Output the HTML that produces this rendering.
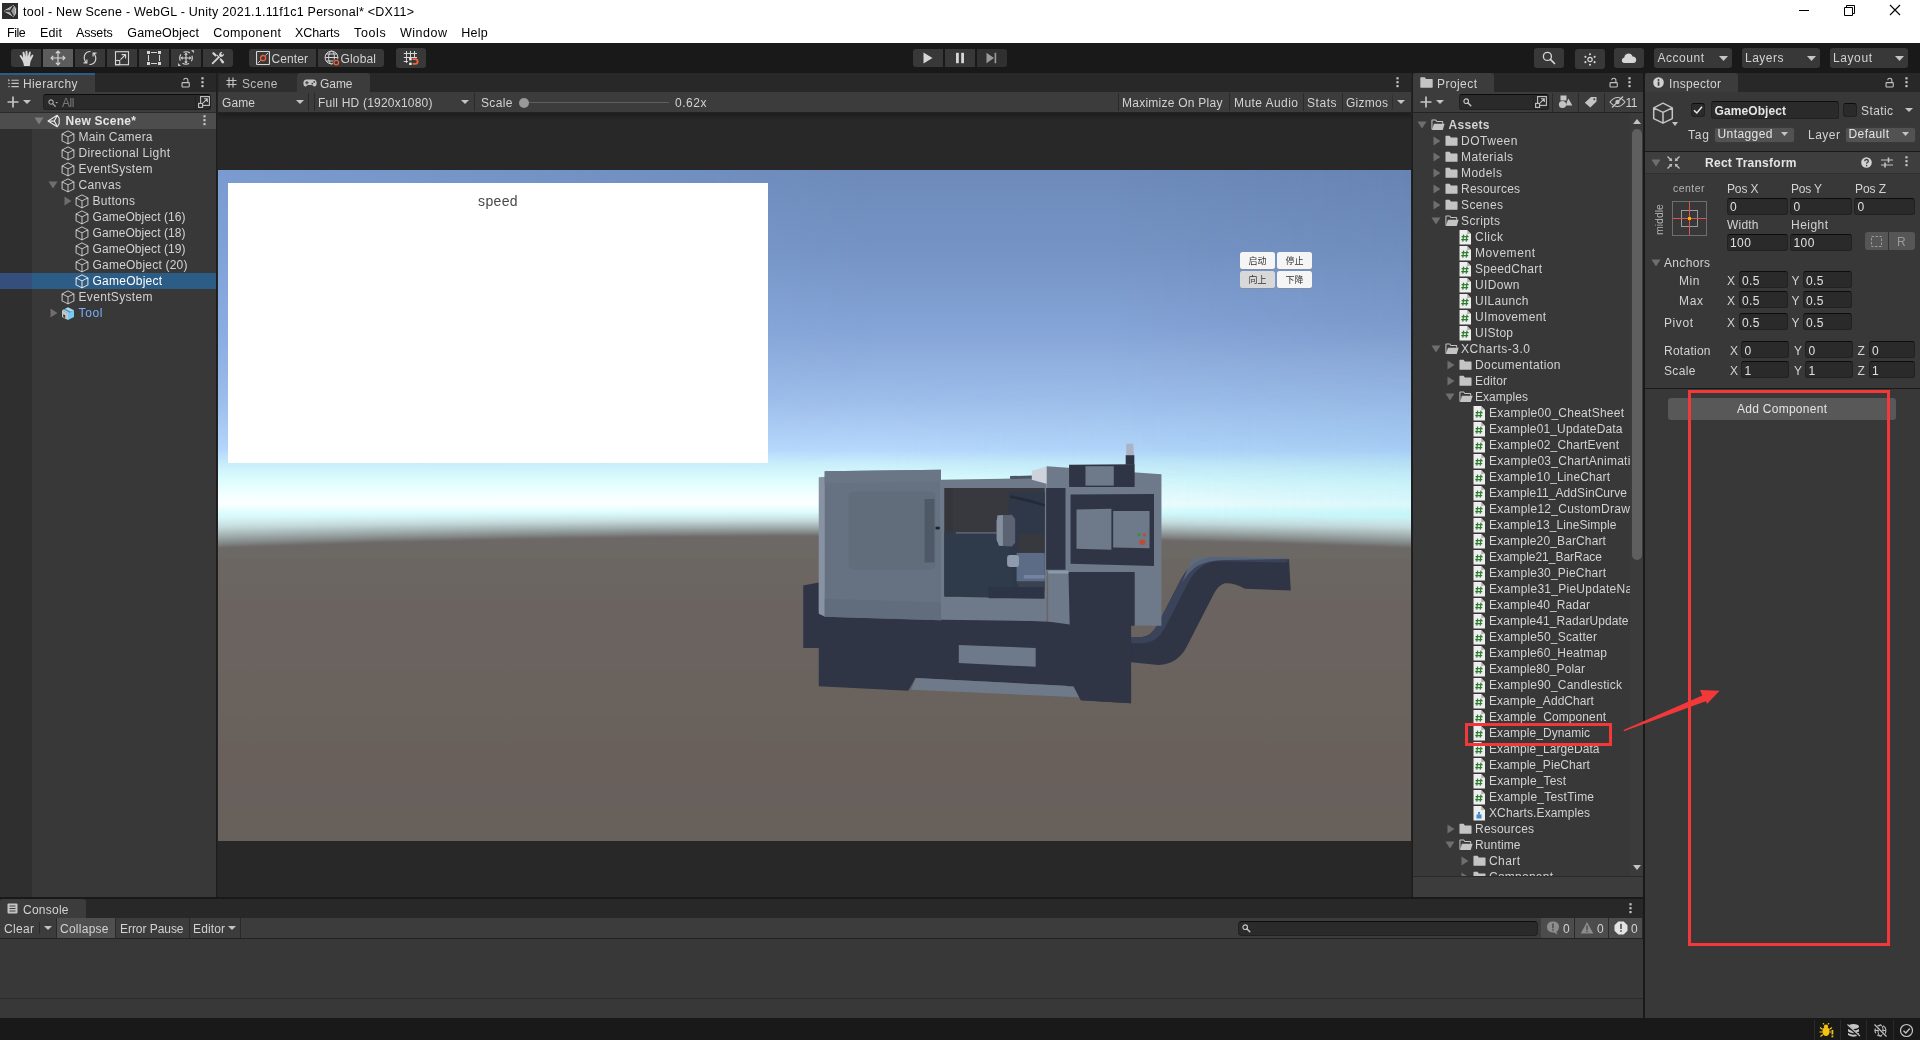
<!DOCTYPE html>
<html lang="en">
<head>
<meta charset="utf-8">
<title>tool - New Scene - WebGL - Unity 2021.1.11f1c1 Personal* &lt;DX11&gt;</title>
<style>
html,body{margin:0;padding:0;background:#191919;}
body{width:1920px;height:1040px;overflow:hidden;font-family:"Liberation Sans","Noto Sans CJK SC",sans-serif;font-size:12px;color:#d2d2d2;}
#app{will-change:transform;position:relative;width:1920px;height:1040px;overflow:hidden;background:#191919;}
#app div,#app span.t,#app svg.i{position:absolute;box-sizing:border-box;}
.t{white-space:nowrap;height:16px;line-height:16px;letter-spacing:.3px;}
.dim{color:#bdbdbd;}
.panel{background:#383838;}
.tabbar{background:#282828;}
.tab{background:#3c3c3c;border-radius:3px 3px 0 0;}
.tbar{background:#3c3c3c;border-bottom:1px solid #232323;}
.fld{background:#2a2a2a;border:1px solid #212121;border-top-color:#0d0d0d;border-radius:3px;}
.dd{background:#525252;border:1px solid #3a3a3a;border-radius:3px;}
.tb{background:#383838;border-radius:2px;}
.sep{background:#232323;}
</style>
</head>
<body>
<div id="app">
<!-- window title bar -->
<section class="window-title-bar">
<div style="left:0px;top:0px;width:1920px;height:43px;background:#ffffff;"></div>
<svg class="i" style="left:2px;top:3px;" width="16" height="16" viewBox="0 0 16 16"><rect width="16" height="16" fill="#2d2d2d"/><path d="M2.200 8 11.400 2.600 13.600 5.400V10.600L11.400 13.400Z" fill="#9a9a9a" stroke="#dcdcdc" stroke-width=".9" stroke-linejoin="round"/><path d="M2.400 8H8.300M8.300 8 11.300 2.800M8.300 8 11.300 13.200" fill="none" stroke="#2d2d2d" stroke-width="1.500"/></svg>
<span class="t" style="left:23px;top:4px;height:17px;line-height:17px;font-size:12.5px;color:#000;letter-spacing:0.25px;">tool - New Scene - WebGL - Unity 2021.1.11f1c1 Personal* &lt;DX11&gt;</span>
<svg class="i" style="left:1794px;top:0px;" width="20" height="20" viewBox="0 0 20 20"><path d="M5 10.5H15" stroke="#000" stroke-width="1"/></svg>
<svg class="i" style="left:1839px;top:0px;" width="20" height="20" viewBox="0 0 20 20"><path d="M5.5 7.5H13.5V15.5H5.5Z M7.5 7.5V5.5H15.5V13.5H13.5" fill="none" stroke="#000" stroke-width="1"/></svg>
<svg class="i" style="left:1885px;top:0px;" width="20" height="20" viewBox="0 0 20 20"><path d="M5 5 15 15M15 5 5 15" stroke="#000" stroke-width="1.1"/></svg>
</section>
<!-- menu bar -->
<section class="menu-bar">
<span class="t" style="left:7px;top:25px;height:17px;line-height:17px;font-size:12.5px;color:#000;letter-spacing:-0.48px;">File</span>
<span class="t" style="left:40px;top:25px;height:17px;line-height:17px;font-size:12.5px;color:#000;letter-spacing:0.15px;">Edit</span>
<span class="t" style="left:76px;top:25px;height:17px;line-height:17px;font-size:12.5px;color:#000;letter-spacing:-0.16px;">Assets</span>
<span class="t" style="left:127.3px;top:25px;height:17px;line-height:17px;font-size:12.5px;color:#000;letter-spacing:0.17px;">GameObject</span>
<span class="t" style="left:213.3px;top:25px;height:17px;line-height:17px;font-size:12.5px;color:#000;letter-spacing:0.38px;">Component</span>
<span class="t" style="left:295px;top:25px;height:17px;line-height:17px;font-size:12.5px;color:#000;letter-spacing:-0.08px;">XCharts</span>
<span class="t" style="left:354px;top:25px;height:17px;line-height:17px;font-size:12.5px;color:#000;letter-spacing:0.63px;">Tools</span>
<span class="t" style="left:400px;top:25px;height:17px;line-height:17px;font-size:12.5px;color:#000;letter-spacing:0.51px;">Window</span>
<span class="t" style="left:461.3px;top:25px;height:17px;line-height:17px;font-size:12.5px;color:#000;letter-spacing:0.23px;">Help</span>
</section>
<!-- main toolbar -->
<section class="main-toolbar">
<div style="left:0px;top:43px;width:1920px;height:30px;background:#191919;"></div>
<div style="left:11px;top:49px;width:30px;height:18px;background:#383838;border-radius:3px 0 0 3px;"></div>
<div style="left:43px;top:49px;width:30px;height:18px;background:#5c5c5c;border-radius:0;"></div>
<div style="left:75px;top:49px;width:30px;height:18px;background:#383838;border-radius:0;"></div>
<div style="left:107px;top:49px;width:30px;height:18px;background:#383838;border-radius:0;"></div>
<div style="left:139px;top:49px;width:30px;height:18px;background:#383838;border-radius:0;"></div>
<div style="left:171px;top:49px;width:30px;height:18px;background:#383838;border-radius:0;"></div>
<div style="left:203px;top:49px;width:30px;height:18px;background:#383838;border-radius:0 3px 3px 0;"></div>
<svg class="i" style="left:17.5px;top:49.5px;" width="17" height="17" viewBox="0 0 15.3 15.3"><path d="M3.1 8.2 1.6 5.6Q1.2 4.8 1.9 4.5 2.6 4.2 3.1 4.9L4.6 7 4.1 2.4Q4 1.6 4.8 1.5 5.6 1.4 5.8 2.2L6.7 6 6.8 1.4Q6.8 .6 7.6 .6 8.4 .6 8.5 1.4L8.8 6 9.9 2Q10.1 1.2 10.9 1.4 11.7 1.6 11.5 2.4L10.8 6.6 12.4 4.4Q12.9 3.8 13.5 4.2 14.1 4.6 13.7 5.3L11.6 9.6Q11.2 10.6 11 11.6L10.6 14.5H5.4L4.9 12Q4.4 10.2 3.1 8.2Z" fill="#d6d6d6"/></svg>
<svg class="i" style="left:50px;top:50px;" width="16" height="16" viewBox="0 0 16 16"><path d="M8 1.2V14.800M1.200 8H14.800M5.800 3.300 8 1.100 10.200 3.300M5.800 12.700 8 14.900 10.200 12.700M3.300 5.800 1.100 8 3.300 10.200M12.700 5.800 14.900 8 12.700 10.200" fill="none" stroke="#d6d6d6" stroke-width="1.150"/></svg>
<svg class="i" style="left:82px;top:50px;" width="16" height="16" viewBox="0 0 16 16"><path d="M8.600 1.500Q4.200 1.300 2.600 5.200 1.300 9.300 4.300 12.800M7.400 14.500Q11.800 14.700 13.400 10.800 14.700 6.700 11.700 3.200" fill="none" stroke="#d6d6d6" stroke-width="1.150"/><path d="M1.500 12.900H4.900V9.500M14.500 3.100H11.100V6.500" fill="none" stroke="#d6d6d6" stroke-width="1.150"/></svg>
<svg class="i" style="left:114px;top:50px;" width="16" height="16" viewBox="0 0 16 16"><rect x="1.500" y="1.700" width="13" height="13" fill="none" stroke="#d6d6d6" stroke-width="1.100"/><rect x="1.500" y="10.500" width="4.200" height="4.200" fill="none" stroke="#d6d6d6" stroke-width="1.100"/><path d="M6.500 9.700 11.500 4.700M7.600 4.600H11.600V8.600" fill="none" stroke="#d6d6d6" stroke-width="1.100"/></svg>
<svg class="i" style="left:146px;top:50px;" width="16" height="16" viewBox="0 0 16 16"><path d="M5 2.500H11M5 13.500H11M2.500 5V11M13.500 5V11" stroke="#d6d6d6" stroke-width="1.100" fill="none"/><rect x="1" y="1" width="3" height="3" fill="#d6d6d6"/><rect x="12" y="1" width="3" height="3" fill="#d6d6d6"/><rect x="1" y="12" width="3" height="3" fill="#d6d6d6"/><rect x="12" y="12" width="3" height="3" fill="#d6d6d6"/></svg>
<svg class="i" style="left:177px;top:49px;" width="18" height="18" viewBox="0 0 16 16"><circle cx="8" cy="8" r="5.6" fill="none" stroke="#d6d6d6" stroke-width="1" stroke-dasharray="6 2.8" stroke-dashoffset="3"/><path d="M8 3 9.6 5H8.5V7.5H11V6.4L13 8 11 9.6V8.5H8.5V11H9.6L8 13 6.4 11H7.5V8.5H5V9.6L3 8 5 6.4V7.5H7.5V5H6.4Z" fill="#d6d6d6"/><path d="M12.5 1 15 1 15 3.5ZM1 12.5V15H3.5Z" fill="#d6d6d6"/></svg>
<svg class="i" style="left:210px;top:50px;" width="16" height="16" viewBox="0 0 16 16"><path d="M2.600 13.400 8.600 7.400" stroke="#d6d6d6" stroke-width="1.700" stroke-linecap="round"/><path d="M9.400 3.400Q10.500 1.600 12.600 2.100L11 3.700 12.300 5 13.900 3.400Q14.400 5.500 12.600 6.600 11.400 7.200 10.100 6.700L9.300 5.900Q8.800 4.600 9.400 3.400Z" fill="#d6d6d6"/><path d="M2.400 2.400 4 2.200 7 5.200 5.400 6.800 2.300 3.800Z" fill="#d6d6d6"/><path d="M9.600 9.200 10.700 8.100 14 11.400Q14.500 12.300 13.700 13.100 12.900 13.800 12 13.300Z" fill="#d6d6d6"/><path d="M7 5.200 9.600 7.800" stroke="#d6d6d6" stroke-width="1.200"/></svg>
<div style="left:249px;top:49px;width:67px;height:18px;background:#383838;border-radius:3px 0 0 3px;"></div>
<div style="left:318px;top:49px;width:66px;height:18px;background:#383838;border-radius:0 3px 3px 0;"></div>
<svg class="i" style="left:256px;top:51px;" width="14" height="14" viewBox="0 0 14 14"><rect x=".55" y=".55" width="12.900" height="12.900" rx=".5" fill="none" stroke="#d6d6d6" stroke-width="1.100"/><path d="M1.800 12.200 12.200 1.800" stroke="#d6d6d6" stroke-width=".9"/><circle cx="7.100" cy="7.100" r="3.400" fill="#383838"/><circle cx="7.100" cy="7.100" r="2.600" fill="none" stroke="#f0623a" stroke-width="1.300"/></svg>
<span class="t" style="left:271.5px;top:51px;color:#d2d2d2;letter-spacing:0.10px;">Center</span>
<svg class="i" style="left:324px;top:50px;" width="17" height="17" viewBox="0 0 17 17"><circle cx="7.5" cy="7.5" r="6.4" fill="none" stroke="#d6d6d6" stroke-width="1"/><ellipse cx="7.5" cy="7.5" rx="2.9" ry="6.4" fill="none" stroke="#d6d6d6" stroke-width="1"/><path d="M1.2 7.5H13.8M2.2 4H12.8M2.2 11H12.8" stroke="#d6d6d6" stroke-width="1" fill="none"/><circle cx="12.3" cy="12.6" r="3.6" fill="#383838"/><circle cx="12.3" cy="12.6" r="2.3" fill="none" stroke="#f0623a" stroke-width="1.3"/></svg>
<span class="t" style="left:340.5px;top:51px;color:#d2d2d2;letter-spacing:0.16px;">Global</span>
<div style="left:396px;top:48px;width:30px;height:20px;background:#383838;border-radius:3px;"></div>
<svg class="i" style="left:403px;top:50px;" width="16" height="16" viewBox="0 0 16 16"><path d="M3.500 1V13M7.500 1V8M11.500 1V8M.800 3.500H14M.800 7.500H14M.800 11.500H5" stroke="#d6d6d6" stroke-width="1" fill="none"/><rect x="6.200" y="8" width="2.400" height="2.400" fill="#f0f0f0"/><rect x="6.200" y="12.600" width="2.400" height="2.400" fill="#f0f0f0"/><path d="M9.600 9.200H12.400Q14.600 9.300 14.600 11.500 14.600 13.800 12.400 13.800H9.600" fill="none" stroke="#f0623a" stroke-width="1.800"/></svg>
<div style="left:913px;top:49px;width:30px;height:18px;background:#383838;border-radius:3px 0 0 3px;"></div>
<div style="left:945px;top:49px;width:30px;height:18px;background:#383838;border-radius:0;"></div>
<div style="left:977px;top:49px;width:30px;height:18px;background:#303030;border-radius:0 3px 3px 0;"></div>
<svg class="i" style="left:922px;top:52px;" width="12" height="12" viewBox="0 0 12 12"><path d="M1.5 .5 10.5 6 1.5 11.5Z" fill="#d6d6d6"/></svg>
<svg class="i" style="left:954px;top:52px;" width="12" height="12" viewBox="0 0 12 12"><rect x="2" y=".8" width="2.8" height="10.4" fill="#d6d6d6"/><rect x="7.2" y=".8" width="2.8" height="10.4" fill="#d6d6d6"/></svg>
<svg class="i" style="left:985px;top:52px;" width="14" height="12" viewBox="0 0 14 12"><path d="M1.5 .8 9 6 1.5 11.2Z" fill="#9a9a9a"/><rect x="9.6" y=".8" width="1.6" height="10.4" fill="#9a9a9a"/></svg>
<div style="left:1534px;top:48px;width:30px;height:20px;background:#383838;border-radius:3px;"></div>
<div style="left:1575px;top:49px;width:30px;height:20px;background:#383838;border-radius:3px;"></div>
<div style="left:1614px;top:48px;width:30px;height:20px;background:#383838;border-radius:3px;"></div>
<svg class="i" style="left:1542px;top:51px;" width="14" height="14" viewBox="0 0 14 14"><circle cx="5.4" cy="5.4" r="4" fill="none" stroke="#d6d6d6" stroke-width="1.3"/><path d="M8.4 8.4 12.5 12.5" stroke="#d6d6d6" stroke-width="1.7" stroke-linecap="round"/></svg>
<svg class="i" style="left:1582px;top:52px;" width="16" height="15" viewBox="0 0 16 15"><circle cx="8" cy="7.500" r="2.200" fill="none" stroke="#d6d6d6" stroke-width="1.200"/><g fill="#d6d6d6"><circle cx="8.00" cy="2.20" r="1.050"/><circle cx="12.59" cy="4.85" r="1.050"/><circle cx="12.59" cy="10.15" r="1.050"/><circle cx="8.00" cy="12.80" r="1.050"/><circle cx="3.41" cy="10.15" r="1.050"/><circle cx="3.41" cy="4.85" r="1.050"/></g></svg>
<svg class="i" style="left:1621px;top:52px;" width="16" height="12" viewBox="0 0 16 12"><path d="M4 11Q.8 11 .8 8.2 .8 5.8 3.3 5.4 3.8 2 7.2 1.6 10.6 1.4 11.6 4.6 15.2 4.8 15.2 8 15.2 11 12 11Z" fill="#d6d6d6"/></svg>
<div style="left:1654px;top:48px;width:78px;height:20px;background:#383838;border-radius:3px;"></div>
<span class="t" style="left:1657.5px;top:50px;color:#d2d2d2;letter-spacing:0.52px;">Account</span>
<svg class="i" style="left:1719px;top:55.5px;" width="9" height="5" viewBox="0 0 9 5"><path d="M0 0H9L4.5 5Z" fill="#c4c4c4"/></svg>
<div style="left:1742px;top:48px;width:78px;height:20px;background:#383838;border-radius:3px;"></div>
<span class="t" style="left:1745px;top:50px;color:#d2d2d2;letter-spacing:0.50px;">Layers</span>
<svg class="i" style="left:1807px;top:55.5px;" width="9" height="5" viewBox="0 0 9 5"><path d="M0 0H9L4.5 5Z" fill="#c4c4c4"/></svg>
<div style="left:1830px;top:48px;width:78px;height:20px;background:#383838;border-radius:3px;"></div>
<span class="t" style="left:1833px;top:50px;color:#d2d2d2;letter-spacing:0.59px;">Layout</span>
<svg class="i" style="left:1895px;top:55.5px;" width="9" height="5" viewBox="0 0 9 5"><path d="M0 0H9L4.5 5Z" fill="#c4c4c4"/></svg>
</section>
<!-- hierarchy panel -->
<section class="hierarchy-panel">
<div class="panel" style="left:0px;top:73px;width:216px;height:824px;"></div>
<div class="tabbar" style="left:0px;top:73px;width:216px;height:19px;"></div>
<div class="tab" style="left:0px;top:73px;width:95px;height:19px;border-top:2px solid #2c5d87;border-radius:0;"></div>
<svg class="i" style="left:7.5px;top:78.5px;" width="11" height="9" viewBox="0 0 11 9"><path d="M3.400 1.200H10.800M3.400 4.400H10.800M3.400 7.600H10.800" stroke="#c4c4c4" stroke-width="1.100"/><path d="M.2 0 2 1.200 .2 2.400Z" fill="#c4c4c4"/><rect x=".4" y="3.800" width="1.300" height="1.200" fill="#c4c4c4"/><rect x=".4" y="7" width="1.300" height="1.200" fill="#c4c4c4"/></svg>
<span class="t" style="left:23px;top:76px;letter-spacing:0.39px;">Hierarchy</span>
<svg class="i" style="left:181px;top:76.5px;" width="10" height="11" viewBox="0 0 10 11"><path d="M6.900 5.600V3.400Q6.900 1.300 4.800 1.300 2.800 1.300 2.700 3.200" fill="none" stroke="#c4c4c4" stroke-width="1.100"/><rect x="1.050" y="5.650" width="7.200" height="4.300" rx=".6" fill="none" stroke="#c4c4c4" stroke-width="1.100"/></svg>
<svg class="i" style="left:201px;top:77px;" width="3" height="11" viewBox="0 0 3 11"><rect x=".4" y=".2" width="2.200" height="2.200" fill="#c4c4c4"/><rect x=".4" y="4.100" width="2.200" height="2.200" fill="#c4c4c4"/><rect x=".4" y="8" width="2.200" height="2.200" fill="#c4c4c4"/></svg>
<div class="tbar" style="left:0px;top:92px;width:216px;height:21px;"></div>
<svg class="i" style="left:7px;top:96px;" width="12" height="12" viewBox="0 0 12 12"><path d="M6 .5V11.5M.5 6H11.5" stroke="#c4c4c4" stroke-width="1.7"/></svg>
<svg class="i" style="left:23px;top:100px;" width="8" height="4" viewBox="0 0 8 4"><path d="M0 0H8L4.0 4Z" fill="#c4c4c4"/></svg>
<div class="fld" style="left:43px;top:94px;width:168px;height:16px;"></div>
<svg class="i" style="left:48px;top:98.5px;" width="11" height="8.5" viewBox="0 0 13 10"><circle cx="3.6" cy="3.6" r="2.6" fill="none" stroke="#a8a8a8" stroke-width="1.3"/><path d="M5.5 5.5 8.5 8.5" stroke="#a8a8a8" stroke-width="1.5" stroke-linecap="round"/><path d="M8.6 3.4H12L10.3 5.2Z" fill="#a8a8a8"/></svg>
<span class="t" style="left:62px;top:95px;color:#7a7a7a;letter-spacing:-0.42px;">All</span>
<div style="left:195px;top:95px;width:1px;height:14px;background:#212121;"></div>
<svg class="i" style="left:198px;top:96px;" width="12" height="12" viewBox="0 0 12 12"><rect x="2.600" y=".600" width="8.800" height="8.800" fill="none" stroke="#c4c4c4" stroke-width="1.100"/><rect x=".600" y="7.400" width="4" height="4" fill="#2a2a2a" stroke="#c4c4c4" stroke-width="1.100"/><path d="M5.200 6.800 9.200 2.800M6 2.700H9.300V6" fill="none" stroke="#c4c4c4" stroke-width="1.100"/></svg>
<div style="left:0px;top:113px;width:32px;height:784px;background:#2f2f2f;"></div>
<div style="left:0px;top:113px;width:216px;height:16px;background:#4d4d4d;"></div>
<div style="left:0px;top:112px;width:216px;height:1px;background:#2a2a2a;"></div>
<svg class="i" style="left:34px;top:117px;" width="10" height="8" viewBox="0 0 10 8"><path d="M.5 .5H9.5L5 7.5Z" fill="#7d7d7d"/></svg>
<svg class="i" style="left:47px;top:114px;" width="13" height="14" viewBox="0 0 13 14"><path d="M1 7 10.200 1.300 12.200 4.300V9.700L10.200 12.700Z" fill="none" stroke="#e6e6e6" stroke-width="1.150" stroke-linejoin="round"/><path d="M1 7H7.300M7.300 7 10.200 1.500M7.300 7 10.200 12.500" fill="none" stroke="#e6e6e6" stroke-width="1.250"/></svg>
<span class="t" style="left:65.5px;top:113px;font-weight:bold;color:#e4e4e4;letter-spacing:0.27px;">New Scene*</span>
<svg class="i" style="left:203px;top:115px;" width="3" height="11" viewBox="0 0 3 11"><rect x=".4" y=".2" width="2.200" height="2.200" fill="#c4c4c4"/><rect x=".4" y="4.100" width="2.200" height="2.200" fill="#c4c4c4"/><rect x=".4" y="8" width="2.200" height="2.200" fill="#c4c4c4"/></svg>
<svg class="i" style="left:60.5px;top:129.5px;" width="14" height="15" viewBox="0 0 14 15"><path d="M7 .9 12.9 3.9V10.9L7 13.9 1.1 10.9V3.9Z M1.1 3.9 7 6.9 12.9 3.9 M7 6.9V13.9" fill="none" stroke="#c4c4c4" stroke-width="1.050" stroke-linejoin="round"/></svg>
<span class="t" style="left:78.5px;top:129px;letter-spacing:0.20px;">Main Camera</span>
<svg class="i" style="left:60.5px;top:145.5px;" width="14" height="15" viewBox="0 0 14 15"><path d="M7 .9 12.9 3.9V10.9L7 13.9 1.1 10.9V3.9Z M1.1 3.9 7 6.9 12.9 3.9 M7 6.9V13.9" fill="none" stroke="#c4c4c4" stroke-width="1.050" stroke-linejoin="round"/></svg>
<span class="t" style="left:78.5px;top:145px;letter-spacing:0.34px;">Directional Light</span>
<svg class="i" style="left:60.5px;top:161.5px;" width="14" height="15" viewBox="0 0 14 15"><path d="M7 .9 12.9 3.9V10.9L7 13.9 1.1 10.9V3.9Z M1.1 3.9 7 6.9 12.9 3.9 M7 6.9V13.9" fill="none" stroke="#c4c4c4" stroke-width="1.050" stroke-linejoin="round"/></svg>
<span class="t" style="left:78.5px;top:161px;letter-spacing:0.33px;">EventSystem</span>
<svg class="i" style="left:47.5px;top:181px;" width="10" height="8" viewBox="0 0 10 8"><path d="M.5 .5H9.5L5 7.5Z" fill="#6e6e6e"/></svg>
<svg class="i" style="left:60.5px;top:177.5px;" width="14" height="15" viewBox="0 0 14 15"><path d="M7 .9 12.9 3.9V10.9L7 13.9 1.1 10.9V3.9Z M1.1 3.9 7 6.9 12.9 3.9 M7 6.9V13.9" fill="none" stroke="#c4c4c4" stroke-width="1.050" stroke-linejoin="round"/></svg>
<span class="t" style="left:78.5px;top:177px;letter-spacing:0.36px;">Canvas</span>
<svg class="i" style="left:63.5px;top:196px;" width="8" height="10" viewBox="0 0 8 10"><path d="M.5 .5 7.5 5 .5 9.5Z" fill="#6e6e6e"/></svg>
<svg class="i" style="left:74.5px;top:193.5px;" width="14" height="15" viewBox="0 0 14 15"><path d="M7 .9 12.9 3.9V10.9L7 13.9 1.1 10.9V3.9Z M1.1 3.9 7 6.9 12.9 3.9 M7 6.9V13.9" fill="none" stroke="#c4c4c4" stroke-width="1.050" stroke-linejoin="round"/></svg>
<span class="t" style="left:92.5px;top:193px;letter-spacing:0.30px;">Buttons</span>
<svg class="i" style="left:74.5px;top:209.5px;" width="14" height="15" viewBox="0 0 14 15"><path d="M7 .9 12.9 3.9V10.9L7 13.9 1.1 10.9V3.9Z M1.1 3.9 7 6.9 12.9 3.9 M7 6.9V13.9" fill="none" stroke="#c4c4c4" stroke-width="1.050" stroke-linejoin="round"/></svg>
<span class="t" style="left:92.5px;top:209px;letter-spacing:0.07px;">GameObject (16)</span>
<svg class="i" style="left:74.5px;top:225.5px;" width="14" height="15" viewBox="0 0 14 15"><path d="M7 .9 12.9 3.9V10.9L7 13.9 1.1 10.9V3.9Z M1.1 3.9 7 6.9 12.9 3.9 M7 6.9V13.9" fill="none" stroke="#c4c4c4" stroke-width="1.050" stroke-linejoin="round"/></svg>
<span class="t" style="left:92.5px;top:225px;letter-spacing:0.07px;">GameObject (18)</span>
<svg class="i" style="left:74.5px;top:241.5px;" width="14" height="15" viewBox="0 0 14 15"><path d="M7 .9 12.9 3.9V10.9L7 13.9 1.1 10.9V3.9Z M1.1 3.9 7 6.9 12.9 3.9 M7 6.9V13.9" fill="none" stroke="#c4c4c4" stroke-width="1.050" stroke-linejoin="round"/></svg>
<span class="t" style="left:92.5px;top:241px;letter-spacing:0.07px;">GameObject (19)</span>
<svg class="i" style="left:74.5px;top:257.5px;" width="14" height="15" viewBox="0 0 14 15"><path d="M7 .9 12.9 3.9V10.9L7 13.9 1.1 10.9V3.9Z M1.1 3.9 7 6.9 12.9 3.9 M7 6.9V13.9" fill="none" stroke="#c4c4c4" stroke-width="1.050" stroke-linejoin="round"/></svg>
<span class="t" style="left:92.5px;top:257px;letter-spacing:0.21px;">GameObject (20)</span>
<div style="left:0px;top:273px;width:216px;height:16px;background:#2c5d87;"></div>
<div style="left:0px;top:273px;width:32px;height:16px;background:#344f7c;"></div>
<svg class="i" style="left:74.5px;top:273.5px;" width="14" height="15" viewBox="0 0 14 15"><path d="M7 .9 12.9 3.9V10.9L7 13.9 1.1 10.9V3.9Z M1.1 3.9 7 6.9 12.9 3.9 M7 6.9V13.9" fill="none" stroke="#e6e6e6" stroke-width="1.050" stroke-linejoin="round"/></svg>
<span class="t" style="left:92.5px;top:273px;color:#ffffff;letter-spacing:0.24px;">GameObject</span>
<svg class="i" style="left:60.5px;top:289.5px;" width="14" height="15" viewBox="0 0 14 15"><path d="M7 .9 12.9 3.9V10.9L7 13.9 1.1 10.9V3.9Z M1.1 3.9 7 6.9 12.9 3.9 M7 6.9V13.9" fill="none" stroke="#c4c4c4" stroke-width="1.050" stroke-linejoin="round"/></svg>
<span class="t" style="left:78.5px;top:289px;letter-spacing:0.33px;">EventSystem</span>
<svg class="i" style="left:49.5px;top:308px;" width="8" height="10" viewBox="0 0 8 10"><path d="M.5 .5 7.5 5 .5 9.5Z" fill="#6e6e6e"/></svg>
<svg class="i" style="left:60.5px;top:306px;" width="14" height="15" viewBox="0 0 14 15"><path d="M1 4.200 7 7.200V14L1 11Z" fill="#c6c6c6"/><path d="M7 7.200 13 4.200V11L7 14Z" fill="#74cbf6"/><path d="M7 1.200 13 4.200 7 7.200 1 4.200Z" fill="#9adcfb"/><path d="M4 2.700 10 5.700 8.500 6.450 2.500 3.450Z" fill="#383838" opacity=".5"/><path d="M2.200 8.300 4.200 9.300V12L2.200 11Z" fill="#383838"/></svg>
<span class="t" style="left:78.5px;top:305px;color:#7baef5;letter-spacing:0.66px;">Tool</span>
</section>
<!-- scene/game panel -->
<section class="scene-game-panel">
<div style="left:216px;top:73px;width:2px;height:824px;background:linear-gradient(90deg,#1b1b1b,#252525);"></div>
<div style="left:1411px;top:73px;width:2px;height:824px;background:linear-gradient(90deg,#242424,#1b1b1b);"></div>
<div style="left:218px;top:73px;width:1193px;height:824px;background:#282828;"></div>
<div class="tabbar" style="left:218px;top:73px;width:1193px;height:19px;"></div>
<div style="left:218.5px;top:74px;width:78px;height:18px;background:#2e2e2e;border-radius:3px 3px 0 0;"></div>
<div class="tab" style="left:297px;top:73px;width:73px;height:19px;"></div>
<svg class="i" style="left:226px;top:77px;" width="11" height="11" viewBox="0 0 11 11"><path d="M3 .5V10.500M7 .5V10.500M.5 3.500H10.500M.5 7.500H10.500" stroke="#c4c4c4" stroke-width="1.150"/></svg>
<span class="t" style="left:242px;top:76px;color:#bdbdbd;letter-spacing:0.37px;">Scene</span>
<svg class="i" style="left:303px;top:79px;" width="14" height="8" viewBox="0 0 14 8"><path d="M3.6 .4H10.4Q13.6 .4 13.6 3.9 13.6 7.4 11.4 7.4 10.2 7.4 9.2 6H4.8Q3.8 7.4 2.6 7.4 .4 7.4 .4 3.9 .4 .4 3.6 .4Z" fill="#c4c4c4"/><path d="M3.9 2V5.6M2.1 3.8H5.7" stroke="#3c3c3c" stroke-width="1.1"/><circle cx="9.3" cy="4.6" r=".9" fill="#3c3c3c"/><circle cx="11.2" cy="2.9" r=".9" fill="#3c3c3c"/></svg>
<span class="t" style="left:320px;top:76px;letter-spacing:-0.06px;">Game</span>
<svg class="i" style="left:1396px;top:77px;" width="3" height="11" viewBox="0 0 3 11"><rect x=".4" y=".2" width="2.200" height="2.200" fill="#c4c4c4"/><rect x=".4" y="4.100" width="2.200" height="2.200" fill="#c4c4c4"/><rect x=".4" y="8" width="2.200" height="2.200" fill="#c4c4c4"/></svg>
<div class="tbar" style="left:218px;top:92px;width:1193px;height:21px;"></div>
<span class="t" style="left:222px;top:95px;letter-spacing:0.11px;">Game</span>
<svg class="i" style="left:296px;top:100px;" width="8" height="4" viewBox="0 0 8 4"><path d="M0 0H8L4.0 4Z" fill="#c4c4c4"/></svg>
<div style="left:308px;top:93px;width:1px;height:18px;background:#2a2a2a;"></div>
<div style="left:313.5px;top:93px;width:1px;height:18px;background:#2a2a2a;"></div>
<span class="t" style="left:318px;top:95px;letter-spacing:0.21px;">Full HD (1920x1080)</span>
<svg class="i" style="left:461px;top:100px;" width="8" height="4" viewBox="0 0 8 4"><path d="M0 0H8L4.0 4Z" fill="#c4c4c4"/></svg>
<div style="left:474px;top:93px;width:1px;height:18px;background:#2a2a2a;"></div>
<span class="t" style="left:481px;top:95px;letter-spacing:0.37px;">Scale</span>
<div style="left:523px;top:102px;width:146px;height:1px;background:#5e5e5e;"></div>
<div style="left:518.5px;top:97.5px;width:10px;height:10px;background:#999999;border-radius:5px;"></div>
<span class="t" style="left:675px;top:95px;letter-spacing:0.54px;">0.62x</span>
<div style="left:1118px;top:93px;width:1px;height:18px;background:#2a2a2a;"></div>
<div style="left:1229px;top:93px;width:1px;height:18px;background:#2a2a2a;"></div>
<div style="left:1303px;top:93px;width:1px;height:18px;background:#2a2a2a;"></div>
<div style="left:1342px;top:93px;width:1px;height:18px;background:#2a2a2a;"></div>
<span class="t" style="left:1122px;top:95px;letter-spacing:0.25px;">Maximize On Play</span>
<span class="t" style="left:1234px;top:95px;letter-spacing:0.44px;">Mute Audio</span>
<span class="t" style="left:1307px;top:95px;letter-spacing:0.54px;">Stats</span>
<span class="t" style="left:1346px;top:95px;letter-spacing:0.27px;">Gizmos</span>
<div style="left:1392px;top:95px;width:1px;height:14px;background:#2f2f2f;"></div>
<svg class="i" style="left:1397px;top:100px;" width="8" height="4" viewBox="0 0 8 4"><path d="M0 0H8L4.0 4Z" fill="#c4c4c4"/></svg>
<div style="left:218px;top:113px;width:1193px;height:7px;background:linear-gradient(180deg,#1d1d1d,#282828);"></div>
<div class="gameview" style="left:218px;top:170px;width:1193px;height:671px;overflow:hidden;background:linear-gradient(180deg,#6d8aba 0px,#7594c5 80px,#85a4d7 160px,#9dbeea 230px,#b6d8fc 280px,#c8eefb 293px,#dcfdfd 310px,#f4ffff 325px,#fbffff 334px,#e4fdfd 341px,#dcfcfd 344px,#6b635e 420px,#68605a 671px);">
<div style="left:0;top:0;width:1193px;height:300px;background:linear-gradient(90deg,rgba(150,190,250,.33) 0,rgba(150,190,250,.12) 35%,rgba(150,190,250,0) 55%,rgba(60,80,120,0) 75%,rgba(60,80,120,.10) 100%);-webkit-mask-image:linear-gradient(180deg,#000 0,#000 50%,transparent 100%);mask-image:linear-gradient(180deg,#000 0,#000 50%,transparent 100%);"></div>
<svg class="i" style="left:0;top:330px" width="1193" height="341" viewBox="0 0 1193 341"><defs><filter id="hz" x="-2%" y="-10%" width="104%" height="120%"><feGaussianBlur stdDeviation=".9"/></filter><linearGradient id="gr" x1="0" y1="0" x2="0" y2="1"><stop offset="0" stop-color="#6d6866"/><stop offset=".25" stop-color="#6b645f"/><stop offset="1" stop-color="#68605a"/></linearGradient></defs><g filter="url(#hz)"><path d="M-40 16.0Q597 8.0 1233 16.0V22.0H-40Z" fill="#dcfcfd"/><path d="M-40 17.1Q597 8.5 1233 17.1V23.1H-40Z" fill="#daf9fa"/><path d="M-40 18.2Q597 8.9 1233 18.2V24.2H-40Z" fill="#d8f6f7"/><path d="M-40 19.3Q597 9.4 1233 19.3V25.3H-40Z" fill="#d5f2f4"/><path d="M-40 20.4Q597 9.9 1233 20.4V26.4H-40Z" fill="#d3eff0"/><path d="M-40 21.5Q597 10.3 1233 21.5V27.5H-40Z" fill="#d1eced"/><path d="M-40 22.6Q597 10.8 1233 22.6V28.6H-40Z" fill="#cfe9ea"/><path d="M-40 23.7Q597 11.3 1233 23.7V29.7H-40Z" fill="#cde5e7"/><path d="M-40 24.8Q597 11.7 1233 24.8V30.8H-40Z" fill="#cae2e4"/><path d="M-40 25.9Q597 12.2 1233 25.9V31.9H-40Z" fill="#c8dfe1"/><path d="M-40 27.0Q597 12.7 1233 27.0V33.0H-40Z" fill="#c6dcde"/><path d="M-40 28.1Q597 13.1 1233 28.1V34.1H-40Z" fill="#c3d7d9"/><path d="M-40 29.2Q597 13.6 1233 29.2V35.2H-40Z" fill="#bed2d4"/><path d="M-40 30.3Q597 14.1 1233 30.3V36.3H-40Z" fill="#bacdce"/><path d="M-40 31.4Q597 14.5 1233 31.4V37.4H-40Z" fill="#b6c8c9"/><path d="M-40 32.5Q597 15.0 1233 32.5V38.5H-40Z" fill="#b1c2c3"/><path d="M-40 33.6Q597 15.5 1233 33.6V39.6H-40Z" fill="#adbdbe"/><path d="M-40 34.7Q597 15.9 1233 34.7V40.7H-40Z" fill="#a9b8b9"/><path d="M-40 35.8Q597 16.4 1233 35.8V41.8H-40Z" fill="#a4b3b3"/><path d="M-40 36.9Q597 16.9 1233 36.9V42.9H-40Z" fill="#a0adae"/><path d="M-40 38.0Q597 17.3 1233 38.0V44.0H-40Z" fill="#9ca8a8"/><path d="M-40 39.1Q597 17.8 1233 39.1V45.1H-40Z" fill="#97a3a3"/><path d="M-40 40.2Q597 18.3 1233 40.2V46.2H-40Z" fill="#939d9d"/><path d="M-40 41.3Q597 18.7 1233 41.3V47.3H-40Z" fill="#8f9797"/><path d="M-40 42.4Q597 19.2 1233 42.4V48.4H-40Z" fill="#8b9191"/><path d="M-40 43.5Q597 19.7 1233 43.5V49.5H-40Z" fill="#868c8c"/><path d="M-40 44.6Q597 20.1 1233 44.6V50.6H-40Z" fill="#828686"/><path d="M-40 45.7Q597 20.6 1233 45.7V51.7H-40Z" fill="#7e8080"/><path d="M-40 46.8Q597 21.1 1233 46.8V52.8H-40Z" fill="#797878"/><path d="M-40 47.9Q597 21.5 1233 47.9V53.9H-40Z" fill="#73716f"/><path d="M-40 49.0Q597 22.0 1233 49.0V345H-40Z" fill="url(#gr)"/></g></svg>
<div style="left:0;top:200px;width:1193px;height:135px;background:linear-gradient(90deg,rgba(125,180,228,0) 55%,rgba(125,180,228,.24) 100%);-webkit-mask-image:linear-gradient(180deg,transparent 0,#000 50%,#000 70%,transparent 100%);mask-image:linear-gradient(180deg,transparent 0,#000 50%,#000 70%,transparent 100%);"></div>
<div style="left:0;top:296px;width:1193px;height:62px;background:linear-gradient(90deg,rgba(110,225,240,0) 55%,rgba(110,225,240,.22) 100%);-webkit-mask-image:linear-gradient(180deg,transparent 0,#000 50%,#000 75%,transparent 100%);mask-image:linear-gradient(180deg,transparent 0,#000 50%,#000 75%,transparent 100%);"></div>
<div class="chart" style="left:10px;top:13px;width:540px;height:280px;background:#fff;"><span class="t" style="left:0;width:540px;top:10px;text-align:center;font-size:14px;color:#484848;letter-spacing:.35px;">speed</span></div>
<div class="ubtn" style="left:1022px;top:82px;width:35px;height:17px;background:#f5f5f5;border-radius:2.5px;box-shadow:0 .5px 0 #8a8a8a;"><span class="t" style="left:0;width:35px;top:1px;height:17px;line-height:17px;text-align:center;font-size:9px;color:#333;letter-spacing:0;">启动</span></div>
<div class="ubtn" style="left:1059px;top:82px;width:35px;height:17px;background:#f5f5f5;border-radius:2.5px;box-shadow:0 .5px 0 #8a8a8a;"><span class="t" style="left:0;width:35px;top:1px;height:17px;line-height:17px;text-align:center;font-size:9px;color:#333;letter-spacing:0;">停止</span></div>
<div class="ubtn" style="left:1022px;top:101px;width:35px;height:17px;background:#d8d8d8;border-radius:2.5px;box-shadow:0 .5px 0 #8a8a8a;"><span class="t" style="left:0;width:35px;top:1px;height:17px;line-height:17px;text-align:center;font-size:9px;color:#333;letter-spacing:0;">向上</span></div>
<div class="ubtn" style="left:1059px;top:101px;width:35px;height:17px;background:#f5f5f5;border-radius:2.5px;box-shadow:0 .5px 0 #8a8a8a;"><span class="t" style="left:0;width:35px;top:1px;height:17px;line-height:17px;text-align:center;font-size:9px;color:#333;letter-spacing:0;">下降</span></div>
<svg class="i machine" style="left:562px;top:250px" width="540" height="310" viewBox="0 0 1812 1040"><path d="M1170 728H1215Q1245 725 1265 690L1345 535Q1385 462 1460 460L1708 466 1714 572 1560 566Q1520 545 1492 548 1470 555 1455 585L1365 760Q1335 820 1270 822L1170 812Z" fill="#2f3544"/><path d="M1215 728Q1245 725 1265 690L1345 535Q1385 462 1460 460L1708 466 1700 478 1470 474Q1405 478 1370 545L1290 700Q1268 742 1225 748L1175 750V728Z" fill="#3a435a"/><path d="M1380 468Q1420 455 1480 457L1640 460 1708 466 1500 470Q1440 468 1400 490 1370 510 1350 545Z" fill="#5f6b80" opacity=".8"/><path d="M78 555 130 545V640L1178 690V950L1010 940 985 893 455 866 430 908 130 893V765H78Z" fill="#2f3544"/><path d="M455 866 985 893 1003 930 440 905Z" fill="#6e7a8a"/><path d="M600 755 858 765V828L600 815Z" fill="#6e7a8a"/><path d="M130 192 152 190V660L130 650Z" fill="#8793a3"/><path d="M150 172 540 167V672L150 660Z" fill="#667282"/><path d="M150 172 540 167V205L150 212Z" fill="#6a7686"/><path d="M150 600 540 612V672L150 660Z" fill="#616c7c"/><rect x="230" y="240" width="292" height="262" rx="14" fill="#626d7c"/><rect x="485" y="265" width="33" height="213" fill="#4f5867"/><rect x="522" y="358" width="14" height="9" fill="#1f2228"/><path d="M540 200 895 195V675L540 670Z" fill="#6e7a8a"/><path d="M552 228H888V600L552 592Z" fill="#38393e"/><path d="M552 228H580V592H552Z" fill="#34363b"/><path d="M552 376H800V592L552 590Z" fill="#2f3a4a"/><path d="M590 376H730V382H590Z" fill="#566173"/><path d="M768 240H888V382H800V590H790L768 420Z" fill="#2e3848"/><path d="M772 252Q830 262 888 282V290Q830 272 772 262Z" fill="#242b38"/><path d="M800 382H888V450H800Z" fill="#38393e"/><path d="M730 320 778 318 789 332V412L778 424 735 422 727 402V340Z" fill="#5b6373"/><path d="M730 320 748 319V423L735 422 727 402V340Z" fill="#838e9e"/><path d="M794 446H888V542H794Z" fill="#5c6c87"/><rect x="762" y="453" width="40" height="40" rx="10" fill="#8e9aae"/><path d="M818 520H888V532H818Z" fill="#7383a0"/><path d="M794 542H888V572H806Z" fill="#3a4150"/><path d="M700 560H885V598H700Z" fill="#2c3445"/><path d="M845 170 897 155V215L845 200Z" fill="#ced3db"/><path d="M772 188 845 186V197L772 198Z" fill="#4b5564"/><path d="M895 155 1280 182V690H1190V510H895Z" fill="#6e7a8a"/><path d="M970 150 1190 148V225H970Z" fill="#2f3544"/><rect x="1025" y="155" width="95" height="65" fill="#6e7a8a"/><path d="M893 228H958V502H893Z" fill="#2f3544"/><path d="M975 250 1255 248V490L975 482Z" fill="#2f3544"/><path d="M995 300 1112 298V435L995 432Z" fill="#6e7a8a"/><path d="M1118 305H1240V430L1118 428Z" fill="#6e7a8a"/><circle cx="1205" cy="385" r="5.5" fill="#3c8c3a"/><circle cx="1223" cy="385" r="5.5" fill="#c44a32"/><ellipse cx="1216" cy="410" rx="10" ry="9" fill="#c44a32"/><path d="M965 510H1190V690H1178V950L1010 940 985 893 965 893Z" fill="#2f3544"/><path d="M900 510H968L972 686 900 676Z" fill="#6e7a8a"/><path d="M900 505H968V515H900Z" fill="#8d99a9"/><path d="M1162 80H1185L1188 118 1162 118Z" fill="#a9b3c3"/><path d="M1160 118H1189V150H1160Z" fill="#2f3544"/></svg>
</div>
</section>
<!-- project panel -->
<section class="project-panel">
<div class="panel" style="left:1413px;top:73px;width:230px;height:824px;"></div>
<div class="tabbar" style="left:1413px;top:73px;width:230px;height:19px;"></div>
<div class="tab" style="left:1413px;top:73px;width:81px;height:19px;"></div>
<svg class="i" style="left:1420px;top:77px;" width="13" height="11" viewBox="0 0 13 11"><path d="M.3 1Q.3 .3 1 .3H4.8L6 2H12Q12.7 2 12.7 2.7V10Q12.7 10.7 12 10.7H1Q.3 10.7 .3 10Z" fill="#c4c4c4"/></svg>
<span class="t" style="left:1437px;top:76px;letter-spacing:0.44px;">Project</span>
<svg class="i" style="left:1609px;top:76.5px;" width="10" height="11" viewBox="0 0 10 11"><path d="M6.900 5.600V3.400Q6.900 1.300 4.800 1.300 2.800 1.300 2.700 3.200" fill="none" stroke="#c4c4c4" stroke-width="1.100"/><rect x="1.050" y="5.650" width="7.200" height="4.300" rx=".6" fill="none" stroke="#c4c4c4" stroke-width="1.100"/></svg>
<svg class="i" style="left:1628px;top:77px;" width="3" height="11" viewBox="0 0 3 11"><rect x=".4" y=".2" width="2.200" height="2.200" fill="#c4c4c4"/><rect x=".4" y="4.100" width="2.200" height="2.200" fill="#c4c4c4"/><rect x=".4" y="8" width="2.200" height="2.200" fill="#c4c4c4"/></svg>
<div class="tbar" style="left:1413px;top:92px;width:230px;height:21px;"></div>
<svg class="i" style="left:1420px;top:96px;" width="12" height="12" viewBox="0 0 12 12"><path d="M6 .5V11.5M.5 6H11.5" stroke="#c4c4c4" stroke-width="1.7"/></svg>
<svg class="i" style="left:1436px;top:100px;" width="8" height="4" viewBox="0 0 8 4"><path d="M0 0H8L4.0 4Z" fill="#c4c4c4"/></svg>
<div class="fld" style="left:1459px;top:94px;width:90px;height:16px;"></div>
<svg class="i" style="left:1463px;top:98px;" width="9" height="9" viewBox="0 0 9 9"><circle cx="3.2" cy="3.2" r="2.3" fill="none" stroke="#c4c4c4" stroke-width="1.2"/><path d="M5 5 7.8 7.8" stroke="#c4c4c4" stroke-width="1.5" stroke-linecap="round"/></svg>
<div style="left:1533px;top:95px;width:1px;height:14px;background:#212121;"></div>
<svg class="i" style="left:1535px;top:96px;" width="12" height="12" viewBox="0 0 12 12"><rect x="2.600" y=".600" width="8.800" height="8.800" fill="none" stroke="#c4c4c4" stroke-width="1.100"/><rect x=".600" y="7.400" width="4" height="4" fill="#2a2a2a" stroke="#c4c4c4" stroke-width="1.100"/><path d="M5.200 6.800 9.200 2.800M6 2.700H9.300V6" fill="none" stroke="#c4c4c4" stroke-width="1.100"/></svg>
<div style="left:1552px;top:93px;width:1px;height:19px;background:#2a2a2a;"></div>
<div style="left:1578px;top:93px;width:1px;height:19px;background:#2a2a2a;"></div>
<div style="left:1604px;top:93px;width:1px;height:19px;background:#2a2a2a;"></div>
<svg class="i" style="left:1558px;top:95px;" width="15" height="14" viewBox="0 0 15 14"><rect x="2.5" y=".5" width="6" height="5" fill="#c4c4c4"/><circle cx="4.5" cy="9.5" r="3.6" fill="#c4c4c4"/><path d="M10.5 3.5 14.3 10.5H7.8L9.2 6Z" fill="#c4c4c4"/></svg>
<svg class="i" style="left:1584px;top:96px;" width="14" height="12" viewBox="0 0 14 12"><path d="M.8 6.8 7 1H12.5V5.5L6.3 11.5Z" fill="#c4c4c4"/><circle cx="10.3" cy="3.3" r="1" fill="#3c3c3c"/></svg>
<svg class="i" style="left:1609px;top:96px;" width="17" height="12" viewBox="0 0 17 12"><path d="M1 6Q4.5 1.5 8.5 1.5 12.500 1.5 16 6 12.5 10.5 8.5 10.5 4.5 10.5 1 6Z" fill="none" stroke="#c4c4c4" stroke-width="1.2"/><circle cx="8.5" cy="6" r="2.2" fill="#c4c4c4"/><path d="M3 11.5 14 .5" stroke="#c4c4c4" stroke-width="1.3"/></svg>
<span class="t" style="left:1625.5px;top:95px;letter-spacing:-0.46px;">11</span>
<div class="tree" style="left:1413px;top:113px;width:216.5px;height:763px;overflow:hidden;">
<svg class="i" style="left:4px;top:8px;" width="10" height="8" viewBox="0 0 10 8"><path d="M.5 .5H9.5L5 7.5Z" fill="#6e6e6e"/></svg>
<svg class="i" style="left:17.5px;top:6px;" width="14" height="11.5" viewBox="0 0 15 12"><path d="M1 11V1.2Q1 .8 1.4 .8H5L6.3 2.6H12Q12.5 2.6 12.5 3.1V5" fill="none" stroke="#c4c4c4" stroke-width="1.1"/><path d="M3.2 5H14.6L12.6 11.5H1Z" fill="#c4c4c4"/></svg>
<span class="t" style="left:35.5px;top:4px;font-weight:bold;letter-spacing:0.33px;">Assets</span>
<svg class="i" style="left:19.5px;top:23px;" width="8" height="10" viewBox="0 0 8 10"><path d="M.5 .5 7.5 5 .5 9.5Z" fill="#6e6e6e"/></svg>
<svg class="i" style="left:31.5px;top:22px;" width="13" height="11.5" viewBox="0 0 14 12"><path d="M.5 1.2Q.5 .5 1.2 .5H5L6.3 2.4H12.8Q13.5 2.4 13.5 3.1V10.8Q13.5 11.5 12.8 11.5H1.2Q.5 11.5 .5 10.8Z" fill="#c4c4c4"/></svg>
<span class="t" style="left:48px;top:20px;letter-spacing:0.52px;">DOTween</span>
<svg class="i" style="left:19.5px;top:39px;" width="8" height="10" viewBox="0 0 8 10"><path d="M.5 .5 7.5 5 .5 9.5Z" fill="#6e6e6e"/></svg>
<svg class="i" style="left:31.5px;top:38px;" width="13" height="11.5" viewBox="0 0 14 12"><path d="M.5 1.2Q.5 .5 1.2 .5H5L6.3 2.4H12.8Q13.5 2.4 13.5 3.1V10.8Q13.5 11.5 12.8 11.5H1.2Q.5 11.5 .5 10.8Z" fill="#c4c4c4"/></svg>
<span class="t" style="left:48px;top:36px;letter-spacing:0.41px;">Materials</span>
<svg class="i" style="left:19.5px;top:55px;" width="8" height="10" viewBox="0 0 8 10"><path d="M.5 .5 7.5 5 .5 9.5Z" fill="#6e6e6e"/></svg>
<svg class="i" style="left:31.5px;top:54px;" width="13" height="11.5" viewBox="0 0 14 12"><path d="M.5 1.2Q.5 .5 1.2 .5H5L6.3 2.4H12.8Q13.5 2.4 13.5 3.1V10.8Q13.5 11.5 12.8 11.5H1.2Q.5 11.5 .5 10.8Z" fill="#c4c4c4"/></svg>
<span class="t" style="left:48px;top:52px;letter-spacing:0.46px;">Models</span>
<svg class="i" style="left:19.5px;top:71px;" width="8" height="10" viewBox="0 0 8 10"><path d="M.5 .5 7.5 5 .5 9.5Z" fill="#6e6e6e"/></svg>
<svg class="i" style="left:31.5px;top:70px;" width="13" height="11.5" viewBox="0 0 14 12"><path d="M.5 1.2Q.5 .5 1.2 .5H5L6.3 2.4H12.8Q13.5 2.4 13.5 3.1V10.8Q13.5 11.5 12.8 11.5H1.2Q.5 11.5 .5 10.8Z" fill="#c4c4c4"/></svg>
<span class="t" style="left:48px;top:68px;letter-spacing:0.21px;">Resources</span>
<svg class="i" style="left:19.5px;top:87px;" width="8" height="10" viewBox="0 0 8 10"><path d="M.5 .5 7.5 5 .5 9.5Z" fill="#6e6e6e"/></svg>
<svg class="i" style="left:31.5px;top:86px;" width="13" height="11.5" viewBox="0 0 14 12"><path d="M.5 1.2Q.5 .5 1.2 .5H5L6.3 2.4H12.8Q13.5 2.4 13.5 3.1V10.8Q13.5 11.5 12.8 11.5H1.2Q.5 11.5 .5 10.8Z" fill="#c4c4c4"/></svg>
<span class="t" style="left:48px;top:84px;letter-spacing:0.39px;">Scenes</span>
<svg class="i" style="left:18px;top:104px;" width="10" height="8" viewBox="0 0 10 8"><path d="M.5 .5H9.5L5 7.5Z" fill="#6e6e6e"/></svg>
<svg class="i" style="left:31.5px;top:102px;" width="14" height="11.5" viewBox="0 0 15 12"><path d="M1 11V1.2Q1 .8 1.4 .8H5L6.3 2.6H12Q12.5 2.6 12.5 3.1V5" fill="none" stroke="#c4c4c4" stroke-width="1.1"/><path d="M3.2 5H14.6L12.6 11.5H1Z" fill="#c4c4c4"/></svg>
<span class="t" style="left:48px;top:100px;letter-spacing:0.39px;">Scripts</span>
<svg class="i" style="left:46px;top:117px;" width="12" height="15" viewBox="0 0 12 15"><path d="M.5 0H8L12 4V14.5H.5Z" fill="#eeeeee"/><path d="M8 0 12 4H8Z" fill="#b9b9b9"/><path d="M4.6 4.6 3.8 11.6M8 4.6 7.2 11.6M2.6 6.7H9.6M2.2 9.5H9.2" stroke="#2d7d33" stroke-width="1.25" fill="none"/></svg>
<span class="t" style="left:62px;top:116px;letter-spacing:0.50px;">Click</span>
<svg class="i" style="left:46px;top:133px;" width="12" height="15" viewBox="0 0 12 15"><path d="M.5 0H8L12 4V14.5H.5Z" fill="#eeeeee"/><path d="M8 0 12 4H8Z" fill="#b9b9b9"/><path d="M4.6 4.6 3.8 11.6M8 4.6 7.2 11.6M2.6 6.7H9.6M2.2 9.5H9.2" stroke="#2d7d33" stroke-width="1.25" fill="none"/></svg>
<span class="t" style="left:62px;top:132px;letter-spacing:0.57px;">Movement</span>
<svg class="i" style="left:46px;top:149px;" width="12" height="15" viewBox="0 0 12 15"><path d="M.5 0H8L12 4V14.5H.5Z" fill="#eeeeee"/><path d="M8 0 12 4H8Z" fill="#b9b9b9"/><path d="M4.6 4.6 3.8 11.6M8 4.6 7.2 11.6M2.6 6.7H9.6M2.2 9.5H9.2" stroke="#2d7d33" stroke-width="1.25" fill="none"/></svg>
<span class="t" style="left:62px;top:148px;letter-spacing:0.33px;">SpeedChart</span>
<svg class="i" style="left:46px;top:165px;" width="12" height="15" viewBox="0 0 12 15"><path d="M.5 0H8L12 4V14.5H.5Z" fill="#eeeeee"/><path d="M8 0 12 4H8Z" fill="#b9b9b9"/><path d="M4.6 4.6 3.8 11.6M8 4.6 7.2 11.6M2.6 6.7H9.6M2.2 9.5H9.2" stroke="#2d7d33" stroke-width="1.25" fill="none"/></svg>
<span class="t" style="left:62px;top:164px;letter-spacing:0.36px;">UIDown</span>
<svg class="i" style="left:46px;top:181px;" width="12" height="15" viewBox="0 0 12 15"><path d="M.5 0H8L12 4V14.5H.5Z" fill="#eeeeee"/><path d="M8 0 12 4H8Z" fill="#b9b9b9"/><path d="M4.6 4.6 3.8 11.6M8 4.6 7.2 11.6M2.6 6.7H9.6M2.2 9.5H9.2" stroke="#2d7d33" stroke-width="1.25" fill="none"/></svg>
<span class="t" style="left:62px;top:180px;letter-spacing:0.30px;">UILaunch</span>
<svg class="i" style="left:46px;top:197px;" width="12" height="15" viewBox="0 0 12 15"><path d="M.5 0H8L12 4V14.5H.5Z" fill="#eeeeee"/><path d="M8 0 12 4H8Z" fill="#b9b9b9"/><path d="M4.6 4.6 3.8 11.6M8 4.6 7.2 11.6M2.6 6.7H9.6M2.2 9.5H9.2" stroke="#2d7d33" stroke-width="1.25" fill="none"/></svg>
<span class="t" style="left:62px;top:196px;letter-spacing:0.33px;">UImovement</span>
<svg class="i" style="left:46px;top:213px;" width="12" height="15" viewBox="0 0 12 15"><path d="M.5 0H8L12 4V14.5H.5Z" fill="#eeeeee"/><path d="M8 0 12 4H8Z" fill="#b9b9b9"/><path d="M4.6 4.6 3.8 11.6M8 4.6 7.2 11.6M2.6 6.7H9.6M2.2 9.5H9.2" stroke="#2d7d33" stroke-width="1.25" fill="none"/></svg>
<span class="t" style="left:62px;top:212px;letter-spacing:0.26px;">UIStop</span>
<svg class="i" style="left:18px;top:232px;" width="10" height="8" viewBox="0 0 10 8"><path d="M.5 .5H9.5L5 7.5Z" fill="#6e6e6e"/></svg>
<svg class="i" style="left:31.5px;top:230px;" width="14" height="11.5" viewBox="0 0 15 12"><path d="M1 11V1.2Q1 .8 1.4 .8H5L6.3 2.6H12Q12.5 2.6 12.5 3.1V5" fill="none" stroke="#c4c4c4" stroke-width="1.1"/><path d="M3.2 5H14.6L12.6 11.5H1Z" fill="#c4c4c4"/></svg>
<span class="t" style="left:48px;top:228px;letter-spacing:0.50px;">XCharts-3.0</span>
<svg class="i" style="left:33.5px;top:247px;" width="8" height="10" viewBox="0 0 8 10"><path d="M.5 .5 7.5 5 .5 9.5Z" fill="#6e6e6e"/></svg>
<svg class="i" style="left:45.5px;top:246px;" width="13" height="11.5" viewBox="0 0 14 12"><path d="M.5 1.2Q.5 .5 1.2 .5H5L6.3 2.4H12.8Q13.5 2.4 13.5 3.1V10.8Q13.5 11.5 12.8 11.5H1.2Q.5 11.5 .5 10.8Z" fill="#c4c4c4"/></svg>
<span class="t" style="left:62px;top:244px;letter-spacing:0.40px;">Documentation</span>
<svg class="i" style="left:33.5px;top:263px;" width="8" height="10" viewBox="0 0 8 10"><path d="M.5 .5 7.5 5 .5 9.5Z" fill="#6e6e6e"/></svg>
<svg class="i" style="left:45.5px;top:262px;" width="13" height="11.5" viewBox="0 0 14 12"><path d="M.5 1.2Q.5 .5 1.2 .5H5L6.3 2.4H12.8Q13.5 2.4 13.5 3.1V10.8Q13.5 11.5 12.8 11.5H1.2Q.5 11.5 .5 10.8Z" fill="#c4c4c4"/></svg>
<span class="t" style="left:62px;top:260px;letter-spacing:0.13px;">Editor</span>
<svg class="i" style="left:32px;top:280px;" width="10" height="8" viewBox="0 0 10 8"><path d="M.5 .5H9.5L5 7.5Z" fill="#6e6e6e"/></svg>
<svg class="i" style="left:45.5px;top:278px;" width="14" height="11.5" viewBox="0 0 15 12"><path d="M1 11V1.2Q1 .8 1.4 .8H5L6.3 2.6H12Q12.5 2.6 12.5 3.1V5" fill="none" stroke="#c4c4c4" stroke-width="1.1"/><path d="M3.2 5H14.6L12.6 11.5H1Z" fill="#c4c4c4"/></svg>
<span class="t" style="left:62px;top:276px;letter-spacing:0.04px;">Examples</span>
<svg class="i" style="left:60px;top:293px;" width="12" height="15" viewBox="0 0 12 15"><path d="M.5 0H8L12 4V14.5H.5Z" fill="#eeeeee"/><path d="M8 0 12 4H8Z" fill="#b9b9b9"/><path d="M4.6 4.6 3.8 11.6M8 4.6 7.2 11.6M2.6 6.7H9.6M2.2 9.5H9.2" stroke="#2d7d33" stroke-width="1.25" fill="none"/></svg>
<span class="t" style="left:76px;top:292px;letter-spacing:0.26px;">Example00_CheatSheet</span>
<svg class="i" style="left:60px;top:309px;" width="12" height="15" viewBox="0 0 12 15"><path d="M.5 0H8L12 4V14.5H.5Z" fill="#eeeeee"/><path d="M8 0 12 4H8Z" fill="#b9b9b9"/><path d="M4.6 4.6 3.8 11.6M8 4.6 7.2 11.6M2.6 6.7H9.6M2.2 9.5H9.2" stroke="#2d7d33" stroke-width="1.25" fill="none"/></svg>
<span class="t" style="left:76px;top:308px;letter-spacing:0.14px;">Example01_UpdateData</span>
<svg class="i" style="left:60px;top:325px;" width="12" height="15" viewBox="0 0 12 15"><path d="M.5 0H8L12 4V14.5H.5Z" fill="#eeeeee"/><path d="M8 0 12 4H8Z" fill="#b9b9b9"/><path d="M4.6 4.6 3.8 11.6M8 4.6 7.2 11.6M2.6 6.7H9.6M2.2 9.5H9.2" stroke="#2d7d33" stroke-width="1.25" fill="none"/></svg>
<span class="t" style="left:76px;top:324px;letter-spacing:0.17px;">Example02_ChartEvent</span>
<svg class="i" style="left:60px;top:341px;" width="12" height="15" viewBox="0 0 12 15"><path d="M.5 0H8L12 4V14.5H.5Z" fill="#eeeeee"/><path d="M8 0 12 4H8Z" fill="#b9b9b9"/><path d="M4.6 4.6 3.8 11.6M8 4.6 7.2 11.6M2.6 6.7H9.6M2.2 9.5H9.2" stroke="#2d7d33" stroke-width="1.25" fill="none"/></svg>
<span class="t" style="left:76px;top:340px;letter-spacing:0.25px;">Example03_ChartAnimation</span>
<svg class="i" style="left:60px;top:357px;" width="12" height="15" viewBox="0 0 12 15"><path d="M.5 0H8L12 4V14.5H.5Z" fill="#eeeeee"/><path d="M8 0 12 4H8Z" fill="#b9b9b9"/><path d="M4.6 4.6 3.8 11.6M8 4.6 7.2 11.6M2.6 6.7H9.6M2.2 9.5H9.2" stroke="#2d7d33" stroke-width="1.25" fill="none"/></svg>
<span class="t" style="left:76px;top:356px;letter-spacing:0.13px;">Example10_LineChart</span>
<svg class="i" style="left:60px;top:373px;" width="12" height="15" viewBox="0 0 12 15"><path d="M.5 0H8L12 4V14.5H.5Z" fill="#eeeeee"/><path d="M8 0 12 4H8Z" fill="#b9b9b9"/><path d="M4.6 4.6 3.8 11.6M8 4.6 7.2 11.6M2.6 6.7H9.6M2.2 9.5H9.2" stroke="#2d7d33" stroke-width="1.25" fill="none"/></svg>
<span class="t" style="left:76px;top:372px;letter-spacing:0.07px;">Example11_AddSinCurve</span>
<svg class="i" style="left:60px;top:389px;" width="12" height="15" viewBox="0 0 12 15"><path d="M.5 0H8L12 4V14.5H.5Z" fill="#eeeeee"/><path d="M8 0 12 4H8Z" fill="#b9b9b9"/><path d="M4.6 4.6 3.8 11.6M8 4.6 7.2 11.6M2.6 6.7H9.6M2.2 9.5H9.2" stroke="#2d7d33" stroke-width="1.25" fill="none"/></svg>
<span class="t" style="left:76px;top:388px;letter-spacing:0.25px;">Example12_CustomDrawing</span>
<svg class="i" style="left:60px;top:405px;" width="12" height="15" viewBox="0 0 12 15"><path d="M.5 0H8L12 4V14.5H.5Z" fill="#eeeeee"/><path d="M8 0 12 4H8Z" fill="#b9b9b9"/><path d="M4.6 4.6 3.8 11.6M8 4.6 7.2 11.6M2.6 6.7H9.6M2.2 9.5H9.2" stroke="#2d7d33" stroke-width="1.25" fill="none"/></svg>
<span class="t" style="left:76px;top:404px;letter-spacing:0.07px;">Example13_LineSimple</span>
<svg class="i" style="left:60px;top:421px;" width="12" height="15" viewBox="0 0 12 15"><path d="M.5 0H8L12 4V14.5H.5Z" fill="#eeeeee"/><path d="M8 0 12 4H8Z" fill="#b9b9b9"/><path d="M4.6 4.6 3.8 11.6M8 4.6 7.2 11.6M2.6 6.7H9.6M2.2 9.5H9.2" stroke="#2d7d33" stroke-width="1.25" fill="none"/></svg>
<span class="t" style="left:76px;top:420px;letter-spacing:0.13px;">Example20_BarChart</span>
<svg class="i" style="left:60px;top:437px;" width="12" height="15" viewBox="0 0 12 15"><path d="M.5 0H8L12 4V14.5H.5Z" fill="#eeeeee"/><path d="M8 0 12 4H8Z" fill="#b9b9b9"/><path d="M4.6 4.6 3.8 11.6M8 4.6 7.2 11.6M2.6 6.7H9.6M2.2 9.5H9.2" stroke="#2d7d33" stroke-width="1.25" fill="none"/></svg>
<span class="t" style="left:76px;top:436px;letter-spacing:-0.03px;">Example21_BarRace</span>
<svg class="i" style="left:60px;top:453px;" width="12" height="15" viewBox="0 0 12 15"><path d="M.5 0H8L12 4V14.5H.5Z" fill="#eeeeee"/><path d="M8 0 12 4H8Z" fill="#b9b9b9"/><path d="M4.6 4.6 3.8 11.6M8 4.6 7.2 11.6M2.6 6.7H9.6M2.2 9.5H9.2" stroke="#2d7d33" stroke-width="1.25" fill="none"/></svg>
<span class="t" style="left:76px;top:452px;letter-spacing:0.21px;">Example30_PieChart</span>
<svg class="i" style="left:60px;top:469px;" width="12" height="15" viewBox="0 0 12 15"><path d="M.5 0H8L12 4V14.5H.5Z" fill="#eeeeee"/><path d="M8 0 12 4H8Z" fill="#b9b9b9"/><path d="M4.6 4.6 3.8 11.6M8 4.6 7.2 11.6M2.6 6.7H9.6M2.2 9.5H9.2" stroke="#2d7d33" stroke-width="1.25" fill="none"/></svg>
<span class="t" style="left:76px;top:468px;letter-spacing:0.25px;">Example31_PieUpdateName</span>
<svg class="i" style="left:60px;top:485px;" width="12" height="15" viewBox="0 0 12 15"><path d="M.5 0H8L12 4V14.5H.5Z" fill="#eeeeee"/><path d="M8 0 12 4H8Z" fill="#b9b9b9"/><path d="M4.6 4.6 3.8 11.6M8 4.6 7.2 11.6M2.6 6.7H9.6M2.2 9.5H9.2" stroke="#2d7d33" stroke-width="1.25" fill="none"/></svg>
<span class="t" style="left:76px;top:484px;letter-spacing:0.11px;">Example40_Radar</span>
<svg class="i" style="left:60px;top:501px;" width="12" height="15" viewBox="0 0 12 15"><path d="M.5 0H8L12 4V14.5H.5Z" fill="#eeeeee"/><path d="M8 0 12 4H8Z" fill="#b9b9b9"/><path d="M4.6 4.6 3.8 11.6M8 4.6 7.2 11.6M2.6 6.7H9.6M2.2 9.5H9.2" stroke="#2d7d33" stroke-width="1.25" fill="none"/></svg>
<span class="t" style="left:76px;top:500px;letter-spacing:0.07px;">Example41_RadarUpdate</span>
<svg class="i" style="left:60px;top:517px;" width="12" height="15" viewBox="0 0 12 15"><path d="M.5 0H8L12 4V14.5H.5Z" fill="#eeeeee"/><path d="M8 0 12 4H8Z" fill="#b9b9b9"/><path d="M4.6 4.6 3.8 11.6M8 4.6 7.2 11.6M2.6 6.7H9.6M2.2 9.5H9.2" stroke="#2d7d33" stroke-width="1.25" fill="none"/></svg>
<span class="t" style="left:76px;top:516px;letter-spacing:0.20px;">Example50_Scatter</span>
<svg class="i" style="left:60px;top:533px;" width="12" height="15" viewBox="0 0 12 15"><path d="M.5 0H8L12 4V14.5H.5Z" fill="#eeeeee"/><path d="M8 0 12 4H8Z" fill="#b9b9b9"/><path d="M4.6 4.6 3.8 11.6M8 4.6 7.2 11.6M2.6 6.7H9.6M2.2 9.5H9.2" stroke="#2d7d33" stroke-width="1.25" fill="none"/></svg>
<span class="t" style="left:76px;top:532px;letter-spacing:0.16px;">Example60_Heatmap</span>
<svg class="i" style="left:60px;top:549px;" width="12" height="15" viewBox="0 0 12 15"><path d="M.5 0H8L12 4V14.5H.5Z" fill="#eeeeee"/><path d="M8 0 12 4H8Z" fill="#b9b9b9"/><path d="M4.6 4.6 3.8 11.6M8 4.6 7.2 11.6M2.6 6.7H9.6M2.2 9.5H9.2" stroke="#2d7d33" stroke-width="1.25" fill="none"/></svg>
<span class="t" style="left:76px;top:548px;letter-spacing:0.09px;">Example80_Polar</span>
<svg class="i" style="left:60px;top:565px;" width="12" height="15" viewBox="0 0 12 15"><path d="M.5 0H8L12 4V14.5H.5Z" fill="#eeeeee"/><path d="M8 0 12 4H8Z" fill="#b9b9b9"/><path d="M4.6 4.6 3.8 11.6M8 4.6 7.2 11.6M2.6 6.7H9.6M2.2 9.5H9.2" stroke="#2d7d33" stroke-width="1.25" fill="none"/></svg>
<span class="t" style="left:76px;top:564px;letter-spacing:0.21px;">Example90_Candlestick</span>
<svg class="i" style="left:60px;top:581px;" width="12" height="15" viewBox="0 0 12 15"><path d="M.5 0H8L12 4V14.5H.5Z" fill="#eeeeee"/><path d="M8 0 12 4H8Z" fill="#b9b9b9"/><path d="M4.6 4.6 3.8 11.6M8 4.6 7.2 11.6M2.6 6.7H9.6M2.2 9.5H9.2" stroke="#2d7d33" stroke-width="1.25" fill="none"/></svg>
<span class="t" style="left:76px;top:580px;letter-spacing:0.06px;">Example_AddChart</span>
<svg class="i" style="left:60px;top:597px;" width="12" height="15" viewBox="0 0 12 15"><path d="M.5 0H8L12 4V14.5H.5Z" fill="#eeeeee"/><path d="M8 0 12 4H8Z" fill="#b9b9b9"/><path d="M4.6 4.6 3.8 11.6M8 4.6 7.2 11.6M2.6 6.7H9.6M2.2 9.5H9.2" stroke="#2d7d33" stroke-width="1.25" fill="none"/></svg>
<span class="t" style="left:76px;top:596px;letter-spacing:0.10px;">Example_Component</span>
<svg class="i" style="left:60px;top:613px;" width="12" height="15" viewBox="0 0 12 15"><path d="M.5 0H8L12 4V14.5H.5Z" fill="#eeeeee"/><path d="M8 0 12 4H8Z" fill="#b9b9b9"/><path d="M4.6 4.6 3.8 11.6M8 4.6 7.2 11.6M2.6 6.7H9.6M2.2 9.5H9.2" stroke="#2d7d33" stroke-width="1.25" fill="none"/></svg>
<span class="t" style="left:76px;top:612px;letter-spacing:0.07px;">Example_Dynamic</span>
<svg class="i" style="left:60px;top:629px;" width="12" height="15" viewBox="0 0 12 15"><path d="M.5 0H8L12 4V14.5H.5Z" fill="#eeeeee"/><path d="M8 0 12 4H8Z" fill="#b9b9b9"/><path d="M4.6 4.6 3.8 11.6M8 4.6 7.2 11.6M2.6 6.7H9.6M2.2 9.5H9.2" stroke="#2d7d33" stroke-width="1.25" fill="none"/></svg>
<span class="t" style="left:76px;top:628px;letter-spacing:0.07px;">Example_LargeData</span>
<svg class="i" style="left:60px;top:645px;" width="12" height="15" viewBox="0 0 12 15"><path d="M.5 0H8L12 4V14.5H.5Z" fill="#eeeeee"/><path d="M8 0 12 4H8Z" fill="#b9b9b9"/><path d="M4.6 4.6 3.8 11.6M8 4.6 7.2 11.6M2.6 6.7H9.6M2.2 9.5H9.2" stroke="#2d7d33" stroke-width="1.25" fill="none"/></svg>
<span class="t" style="left:76px;top:644px;letter-spacing:0.06px;">Example_PieChart</span>
<svg class="i" style="left:60px;top:661px;" width="12" height="15" viewBox="0 0 12 15"><path d="M.5 0H8L12 4V14.5H.5Z" fill="#eeeeee"/><path d="M8 0 12 4H8Z" fill="#b9b9b9"/><path d="M4.6 4.6 3.8 11.6M8 4.6 7.2 11.6M2.6 6.7H9.6M2.2 9.5H9.2" stroke="#2d7d33" stroke-width="1.25" fill="none"/></svg>
<span class="t" style="left:76px;top:660px;letter-spacing:0.15px;">Example_Test</span>
<svg class="i" style="left:60px;top:677px;" width="12" height="15" viewBox="0 0 12 15"><path d="M.5 0H8L12 4V14.5H.5Z" fill="#eeeeee"/><path d="M8 0 12 4H8Z" fill="#b9b9b9"/><path d="M4.6 4.6 3.8 11.6M8 4.6 7.2 11.6M2.6 6.7H9.6M2.2 9.5H9.2" stroke="#2d7d33" stroke-width="1.25" fill="none"/></svg>
<span class="t" style="left:76px;top:676px;letter-spacing:0.23px;">Example_TestTime</span>
<svg class="i" style="left:60px;top:693px;" width="12" height="15" viewBox="0 0 12 15"><path d="M.5 0H8L12 4V14.5H.5Z" fill="#eeeeee"/><path d="M8 0 12 4H8Z" fill="#b9b9b9"/><path d="M3.5 8.5H8.5V12.5H3.5Z" fill="#3b8fd0"/><path d="M5 6H7V8.5H5Z" fill="#3b8fd0"/></svg>
<span class="t" style="left:76px;top:692px;letter-spacing:0.11px;">XCharts.Examples</span>
<svg class="i" style="left:33.5px;top:711px;" width="8" height="10" viewBox="0 0 8 10"><path d="M.5 .5 7.5 5 .5 9.5Z" fill="#6e6e6e"/></svg>
<svg class="i" style="left:45.5px;top:710px;" width="13" height="11.5" viewBox="0 0 14 12"><path d="M.5 1.2Q.5 .5 1.2 .5H5L6.3 2.4H12.8Q13.5 2.4 13.5 3.1V10.8Q13.5 11.5 12.8 11.5H1.2Q.5 11.5 .5 10.8Z" fill="#c4c4c4"/></svg>
<span class="t" style="left:62px;top:708px;letter-spacing:0.21px;">Resources</span>
<svg class="i" style="left:32px;top:728px;" width="10" height="8" viewBox="0 0 10 8"><path d="M.5 .5H9.5L5 7.5Z" fill="#6e6e6e"/></svg>
<svg class="i" style="left:45.5px;top:726px;" width="14" height="11.5" viewBox="0 0 15 12"><path d="M1 11V1.2Q1 .8 1.4 .8H5L6.3 2.6H12Q12.5 2.6 12.5 3.1V5" fill="none" stroke="#c4c4c4" stroke-width="1.1"/><path d="M3.2 5H14.6L12.6 11.5H1Z" fill="#c4c4c4"/></svg>
<span class="t" style="left:62px;top:724px;letter-spacing:0.14px;">Runtime</span>
<svg class="i" style="left:47.5px;top:743px;" width="8" height="10" viewBox="0 0 8 10"><path d="M.5 .5 7.5 5 .5 9.5Z" fill="#6e6e6e"/></svg>
<svg class="i" style="left:59.5px;top:742px;" width="13" height="11.5" viewBox="0 0 14 12"><path d="M.5 1.2Q.5 .5 1.2 .5H5L6.3 2.4H12.8Q13.5 2.4 13.5 3.1V10.8Q13.5 11.5 12.8 11.5H1.2Q.5 11.5 .5 10.8Z" fill="#c4c4c4"/></svg>
<span class="t" style="left:76px;top:740px;letter-spacing:0.41px;">Chart</span>
<svg class="i" style="left:47.5px;top:759px;" width="8" height="10" viewBox="0 0 8 10"><path d="M.5 .5 7.5 5 .5 9.5Z" fill="#6e6e6e"/></svg>
<svg class="i" style="left:59.5px;top:758px;" width="13" height="11.5" viewBox="0 0 14 12"><path d="M.5 1.2Q.5 .5 1.2 .5H5L6.3 2.4H12.8Q13.5 2.4 13.5 3.1V10.8Q13.5 11.5 12.8 11.5H1.2Q.5 11.5 .5 10.8Z" fill="#c4c4c4"/></svg>
<span class="t" style="left:76px;top:756px;letter-spacing:0.25px;">Component</span>
</div>
<div style="left:1630px;top:113px;width:13px;height:763px;background:#3b3b3b;"></div>
<svg class="i" style="left:1633px;top:119px;" width="8" height="5" viewBox="0 0 8 5"><path d="M0 5H8L4 0Z" fill="#c4c4c4"/></svg>
<svg class="i" style="left:1633px;top:865px;" width="8" height="5" viewBox="0 0 8 5"><path d="M0 0H8L4 5Z" fill="#c4c4c4"/></svg>
<div style="left:1632px;top:129px;width:10px;height:431px;background:#5f5f5f;border-radius:5px;"></div>
<div style="left:1413px;top:876px;width:230px;height:21px;background:#3c3c3c;border-top:1px solid #2a2a2a;"></div>
</section>
<!-- inspector panel -->
<section class="inspector-panel">
<div class="panel" style="left:1645px;top:73px;width:275px;height:945px;"></div>
<div class="tabbar" style="left:1645px;top:73px;width:275px;height:19px;"></div>
<div class="tab" style="left:1645px;top:73px;width:93px;height:19px;"></div>
<svg class="i" style="left:1653px;top:77px;" width="11" height="11" viewBox="0 0 11 11"><circle cx="5.5" cy="5.5" r="5.3" fill="#d2d2d2"/><rect x="4.7" y="4.6" width="1.7" height="4.2" fill="#3c3c3c"/><circle cx="5.5" cy="2.9" r="1" fill="#3c3c3c"/></svg>
<span class="t" style="left:1669px;top:76px;letter-spacing:0.33px;">Inspector</span>
<svg class="i" style="left:1885px;top:76.5px;" width="10" height="11" viewBox="0 0 10 11"><path d="M6.900 5.600V3.400Q6.900 1.300 4.800 1.300 2.800 1.300 2.700 3.200" fill="none" stroke="#c4c4c4" stroke-width="1.100"/><rect x="1.050" y="5.650" width="7.200" height="4.300" rx=".6" fill="none" stroke="#c4c4c4" stroke-width="1.100"/></svg>
<svg class="i" style="left:1905px;top:77px;" width="3" height="11" viewBox="0 0 3 11"><rect x=".4" y=".2" width="2.200" height="2.200" fill="#c4c4c4"/><rect x=".4" y="4.100" width="2.200" height="2.200" fill="#c4c4c4"/><rect x=".4" y="8" width="2.200" height="2.200" fill="#c4c4c4"/></svg>
<svg class="i" style="left:1652px;top:102px;" width="22" height="25" viewBox="0 0 22 25"><path d="M11 1.2 20.3 5.8V16.6L11 21.2 1.7 16.6V5.8Z M1.7 5.8 11 10.4 20.3 5.8 M11 10.4V21.2" fill="none" stroke="#c4c4c4" stroke-width="1.5" stroke-linejoin="round"/></svg>
<svg class="i" style="left:1672px;top:122px;" width="6" height="4" viewBox="0 0 6 4"><path d="M0 0H6L3.0 4Z" fill="#c4c4c4"/></svg>
<div class="fld" style="left:1691px;top:103px;width:14px;height:14px;"></div>
<svg class="i" style="left:1693px;top:105px;" width="10" height="10" viewBox="0 0 10 10"><path d="M1 5.2 3.8 8 9 1.8" fill="none" stroke="#e8e8e8" stroke-width="1.5"/></svg>
<div class="fld" style="left:1711px;top:101px;width:128px;height:18px;"></div>
<span class="t" style="left:1714.5px;top:103px;font-weight:bold;color:#e4e4e4;letter-spacing:0.09px;">GameObject</span>
<div class="fld" style="left:1843px;top:103px;width:14px;height:14px;"></div>
<span class="t" style="left:1861px;top:103px;letter-spacing:0.40px;">Static</span>
<svg class="i" style="left:1905px;top:108px;" width="8" height="4" viewBox="0 0 8 4"><path d="M0 0H8L4.0 4Z" fill="#c4c4c4"/></svg>
<span class="t" style="left:1688px;top:127px;letter-spacing:0.83px;">Tag</span>
<div class="dd" style="left:1713.5px;top:126.5px;width:81px;height:16px;"></div>
<span class="t" style="left:1717.5px;top:126px;color:#e4e4e4;letter-spacing:0.42px;">Untagged</span>
<svg class="i" style="left:1781px;top:132px;" width="7" height="4" viewBox="0 0 7 4"><path d="M0 0H7L3.5 4Z" fill="#c4c4c4"/></svg>
<span class="t" style="left:1808px;top:127px;letter-spacing:0.50px;">Layer</span>
<div class="dd" style="left:1844.5px;top:126.5px;width:71.5px;height:16px;"></div>
<span class="t" style="left:1848.5px;top:126px;color:#e4e4e4;letter-spacing:0.41px;">Default</span>
<svg class="i" style="left:1902px;top:132px;" width="7" height="4" viewBox="0 0 7 4"><path d="M0 0H7L3.5 4Z" fill="#c4c4c4"/></svg>
<div style="left:1645px;top:151px;width:275px;height:1px;background:#1a1a1a;"></div>
<div style="left:1645px;top:152px;width:275px;height:21px;background:#3e3e3e;"></div>
<div style="left:1645px;top:173px;width:275px;height:1px;background:#303030;"></div>
<svg class="i" style="left:1651px;top:159px;" width="10" height="8" viewBox="0 0 10 8"><path d="M.5 .5H9.5L5 7.5Z" fill="#6e6e6e"/></svg>
<svg class="i" style="left:1667px;top:156px;" width="13" height="13" viewBox="0 0 13 13"><path d="M5.300 5.300 1.800 4.400 4.400 1.800Z M7.700 5.300 11.200 4.400 8.600 1.800Z M5.300 7.700 1.800 8.600 4.400 11.200Z M7.700 7.700 11.200 8.600 8.600 11.200Z" fill="#c4c4c4"/><path d="M.5 .5 3.500 3.500M12.500 .5 9.500 3.500M.5 12.500 3.500 9.500M12.500 12.500 9.500 9.500" stroke="#c4c4c4" stroke-width="1.300"/></svg>
<span class="t" style="left:1705px;top:155px;font-weight:bold;color:#e4e4e4;letter-spacing:0.27px;">Rect Transform</span>
<svg class="i" style="left:1861px;top:157px;" width="11" height="11" viewBox="0 0 11 11"><circle cx="5.5" cy="5.5" r="5.3" fill="#d2d2d2"/><path d="M3.7 4.2Q3.800 2.500 5.5 2.500 7.300 2.500 7.300 4.100 7.300 5 6.300 5.500 5.600 5.900 5.600 6.800" fill="none" stroke="#3e3e3e" stroke-width="1.3"/><circle cx="5.600" cy="8.600" r=".8" fill="#3e3e3e"/></svg>
<svg class="i" style="left:1881px;top:157px;" width="12" height="11" viewBox="0 0 12 11"><path d="M0 3H12M0 8H12" stroke="#c4c4c4" stroke-width="1.200"/><path d="M7.500 .5V5.500M4 5.500V10.500" stroke="#c4c4c4" stroke-width="1.600"/></svg>
<svg class="i" style="left:1905px;top:156px;" width="3" height="11" viewBox="0 0 3 11"><rect x=".4" y=".2" width="2.200" height="2.200" fill="#c4c4c4"/><rect x=".4" y="4.100" width="2.200" height="2.200" fill="#c4c4c4"/><rect x=".4" y="8" width="2.200" height="2.200" fill="#c4c4c4"/></svg>
<span class="t" style="left:1673px;top:180px;font-size:10.5px;color:#b4b4b4;letter-spacing:0.46px;">center</span>
<span class="t" style="left:1651px;top:219px;width:16px;height:16px;transform:rotate(-90deg);font-size:10.5px;text-align:center;color:#b4b4b4;letter-spacing:0;">middle</span>
<svg class="i" style="left:1672px;top:201px;" width="35" height="35" viewBox="0 0 35 35"><rect x=".5" y=".5" width="34" height="34" fill="none" stroke="#6e6e6e"/><rect x="9.500" y="9.500" width="16" height="16" fill="none" stroke="#9a9a9a"/><path d="M17.500 1V34M1 17.500H34" stroke="#e0524f" stroke-width="1"/><rect x="16" y="16" width="3" height="3" fill="#f0b400"/></svg>
<span class="t" style="left:1727px;top:181px;letter-spacing:-0.13px;">Pos X</span>
<span class="t" style="left:1791px;top:181px;letter-spacing:-0.20px;">Pos Y</span>
<span class="t" style="left:1855px;top:181px;letter-spacing:-0.09px;">Pos Z</span>
<div class="fld" style="left:1726.5px;top:197.5px;width:61px;height:17px;"></div>
<span class="t" style="left:1730.0px;top:198.5px;color:#e0e0e0;letter-spacing:0.4px;">0</span>
<div class="fld" style="left:1790px;top:197.5px;width:61.5px;height:17px;"></div>
<span class="t" style="left:1793.5px;top:198.5px;color:#e0e0e0;letter-spacing:0.4px;">0</span>
<div class="fld" style="left:1854px;top:197.5px;width:61px;height:17px;"></div>
<span class="t" style="left:1857.5px;top:198.5px;color:#e0e0e0;letter-spacing:0.4px;">0</span>
<span class="t" style="left:1727px;top:217px;letter-spacing:0.21px;">Width</span>
<span class="t" style="left:1791px;top:217px;letter-spacing:0.46px;">Height</span>
<div class="fld" style="left:1726.5px;top:233.5px;width:61px;height:17px;"></div>
<span class="t" style="left:1730.0px;top:234.5px;color:#e0e0e0;letter-spacing:0.4px;">100</span>
<div class="fld" style="left:1790px;top:233.5px;width:61.5px;height:17px;"></div>
<span class="t" style="left:1793.5px;top:234.5px;color:#e0e0e0;letter-spacing:0.4px;">100</span>
<div style="left:1865px;top:232px;width:50px;height:18px;background:#565656;border-radius:3px;"></div>
<div style="left:1888px;top:232px;width:1px;height:18px;background:#333;"></div>
<svg class="i" style="left:1871px;top:236px;" width="11" height="11" viewBox="0 0 11 11"><rect x=".5" y=".5" width="10" height="10" fill="none" stroke="#9a9a9a" stroke-dasharray="2.500 1.500"/></svg>
<span class="t" style="left:1897px;top:234px;color:#9a9a9a;">R</span>
<svg class="i" style="left:1651px;top:259px;" width="10" height="8" viewBox="0 0 10 8"><path d="M.5 .5H9.5L5 7.5Z" fill="#6e6e6e"/></svg>
<span class="t" style="left:1664px;top:255px;letter-spacing:0.33px;">Anchors</span>
<span class="t" style="left:1679px;top:273px;letter-spacing:0.58px;">Min</span>
<span class="t" style="left:1727px;top:273px;letter-spacing:-0.50px;">X</span>
<div class="fld" style="left:1738.5px;top:271px;width:49px;height:17px;"></div>
<span class="t" style="left:1742.0px;top:273px;color:#e0e0e0;letter-spacing:0.4px;">0.5</span>
<span class="t" style="left:1791.5px;top:273px;letter-spacing:-0.50px;">Y</span>
<div class="fld" style="left:1802.5px;top:271px;width:49px;height:17px;"></div>
<span class="t" style="left:1806.0px;top:273px;color:#e0e0e0;letter-spacing:0.4px;">0.5</span>
<span class="t" style="left:1679px;top:293px;letter-spacing:0.66px;">Max</span>
<span class="t" style="left:1727px;top:293px;letter-spacing:-0.50px;">X</span>
<div class="fld" style="left:1738.5px;top:291px;width:49px;height:17px;"></div>
<span class="t" style="left:1742.0px;top:293px;color:#e0e0e0;letter-spacing:0.4px;">0.5</span>
<span class="t" style="left:1791.5px;top:293px;letter-spacing:-0.50px;">Y</span>
<div class="fld" style="left:1802.5px;top:291px;width:49px;height:17px;"></div>
<span class="t" style="left:1806.0px;top:293px;color:#e0e0e0;letter-spacing:0.4px;">0.5</span>
<span class="t" style="left:1664px;top:315px;letter-spacing:0.58px;">Pivot</span>
<span class="t" style="left:1727px;top:315px;letter-spacing:-0.50px;">X</span>
<div class="fld" style="left:1738.5px;top:313px;width:49px;height:17px;"></div>
<span class="t" style="left:1742.0px;top:315px;color:#e0e0e0;letter-spacing:0.4px;">0.5</span>
<span class="t" style="left:1791.5px;top:315px;letter-spacing:-0.50px;">Y</span>
<div class="fld" style="left:1802.5px;top:313px;width:49px;height:17px;"></div>
<span class="t" style="left:1806.0px;top:315px;color:#e0e0e0;letter-spacing:0.4px;">0.5</span>
<span class="t" style="left:1664px;top:343px;letter-spacing:0.26px;">Rotation</span>
<span class="t" style="left:1730px;top:343px;letter-spacing:-0.50px;">X</span>
<div class="fld" style="left:1741px;top:341px;width:47.5px;height:17px;"></div>
<span class="t" style="left:1744.5px;top:343px;color:#e0e0e0;letter-spacing:0.4px;">0</span>
<span class="t" style="left:1794px;top:343px;letter-spacing:-0.50px;">Y</span>
<div class="fld" style="left:1805px;top:341px;width:47.5px;height:17px;"></div>
<span class="t" style="left:1808.5px;top:343px;color:#e0e0e0;letter-spacing:0.4px;">0</span>
<span class="t" style="left:1857.5px;top:343px;letter-spacing:-0.33px;">Z</span>
<div class="fld" style="left:1868.5px;top:341px;width:46.5px;height:17px;"></div>
<span class="t" style="left:1872.0px;top:343px;color:#e0e0e0;letter-spacing:0.4px;">0</span>
<span class="t" style="left:1664px;top:363px;letter-spacing:0.37px;">Scale</span>
<span class="t" style="left:1730px;top:363px;letter-spacing:-0.50px;">X</span>
<div class="fld" style="left:1741px;top:361px;width:47.5px;height:17px;"></div>
<span class="t" style="left:1744.5px;top:363px;color:#e0e0e0;letter-spacing:0.4px;">1</span>
<span class="t" style="left:1794px;top:363px;letter-spacing:-0.50px;">Y</span>
<div class="fld" style="left:1805px;top:361px;width:47.5px;height:17px;"></div>
<span class="t" style="left:1808.5px;top:363px;color:#e0e0e0;letter-spacing:0.4px;">1</span>
<span class="t" style="left:1857.5px;top:363px;letter-spacing:-0.33px;">Z</span>
<div class="fld" style="left:1868.5px;top:361px;width:46.5px;height:17px;"></div>
<span class="t" style="left:1872.0px;top:363px;color:#e0e0e0;letter-spacing:0.4px;">1</span>
<div style="left:1645px;top:388px;width:275px;height:1px;background:#1a1a1a;"></div>
<div style="left:1668px;top:398px;width:228px;height:22px;background:#585858;border-radius:3px;"></div>
<span class="t" style="left:1737px;top:401px;color:#e4e4e4;letter-spacing:0.27px;">Add Component</span>
</section>
<!-- console panel -->
<section class="console-panel">
<div class="panel" style="left:0px;top:899px;width:1643px;height:119px;"></div>
<div class="tabbar" style="left:0px;top:899px;width:1643px;height:19px;"></div>
<div class="tab" style="left:0px;top:899px;width:86px;height:19px;"></div>
<svg class="i" style="left:7px;top:903px;" width="11" height="11" viewBox="0 0 11 11"><rect x=".500" y=".5" width="10" height="10" rx="1" fill="#c4c4c4"/><path d="M2.500 3H8.500M2.500 5.500H8.500M2.500 8H8.500" stroke="#3c3c3c" stroke-width="1"/></svg>
<span class="t" style="left:23px;top:902px;letter-spacing:0.25px;">Console</span>
<svg class="i" style="left:1629px;top:903px;" width="3" height="11" viewBox="0 0 3 11"><rect x=".4" y=".2" width="2.200" height="2.200" fill="#c4c4c4"/><rect x=".4" y="4.100" width="2.200" height="2.200" fill="#c4c4c4"/><rect x=".4" y="8" width="2.200" height="2.200" fill="#c4c4c4"/></svg>
<div class="tbar" style="left:0px;top:918px;width:1643px;height:21px;"></div>
<span class="t" style="left:4px;top:921px;letter-spacing:0.33px;">Clear</span>
<div style="left:39px;top:922px;width:1px;height:12px;background:#2a2a2a;"></div>
<svg class="i" style="left:44px;top:926px;" width="8" height="4" viewBox="0 0 8 4"><path d="M0 0H8L4.0 4Z" fill="#c4c4c4"/></svg>
<div style="left:56px;top:918px;width:1px;height:20px;background:#2a2a2a;"></div>
<div style="left:57px;top:918px;width:58px;height:20px;background:#4f4f4f;"></div>
<span class="t" style="left:60px;top:921px;letter-spacing:0.26px;">Collapse</span>
<div style="left:115px;top:918px;width:1px;height:20px;background:#2a2a2a;"></div>
<span class="t" style="left:120px;top:921px;letter-spacing:-0.05px;">Error Pause</span>
<div style="left:189px;top:918px;width:1px;height:20px;background:#2a2a2a;"></div>
<span class="t" style="left:193px;top:921px;letter-spacing:0.13px;">Editor</span>
<svg class="i" style="left:228px;top:926px;" width="8" height="4" viewBox="0 0 8 4"><path d="M0 0H8L4.0 4Z" fill="#c4c4c4"/></svg>
<div style="left:240px;top:918px;width:1px;height:20px;background:#2a2a2a;"></div>
<div class="fld" style="left:1238px;top:921px;width:300px;height:15px;border-radius:4px;"></div>
<svg class="i" style="left:1242px;top:924px;" width="9" height="9" viewBox="0 0 9 9"><circle cx="3.200" cy="3.200" r="2.300" fill="none" stroke="#c4c4c4" stroke-width="1.200"/><path d="M5 5 7.800 7.800" stroke="#c4c4c4" stroke-width="1.500" stroke-linecap="round"/></svg>
<div style="left:1541px;top:918px;width:33px;height:20px;background:#4c4c4c;"></div>
<div style="left:1574px;top:918px;width:1px;height:20px;background:#2a2a2a;"></div>
<svg class="i" style="left:1546px;top:921px;" width="14" height="14" viewBox="0 0 14 14"><path d="M7 .500Q13 .500 13 6 13 9.500 10.500 10.800L11.500 13.500 7.800 11.400H7Q1 11.400 1 6 1 .500 7 .500Z" fill="#8c8c8c"/><rect x="6.200" y="2.500" width="1.500" height="4.800" fill="#4c4c4c"/><rect x="6.200" y="8.200" width="1.500" height="1.500" fill="#4c4c4c"/></svg>
<span class="t" style="left:1563px;top:921px;color:#d2d2d2;">0</span>
<div style="left:1575px;top:918px;width:33px;height:20px;background:#4c4c4c;"></div>
<div style="left:1608px;top:918px;width:1px;height:20px;background:#2a2a2a;"></div>
<svg class="i" style="left:1580px;top:921px;" width="14" height="14" viewBox="0 0 14 14"><path d="M7 1 13.300 12.500H.700Z" fill="#8c8c8c"/><rect x="6.300" y="4.500" width="1.400" height="4.500" fill="#4c4c4c"/><rect x="6.300" y="9.800" width="1.400" height="1.400" fill="#4c4c4c"/></svg>
<span class="t" style="left:1597px;top:921px;color:#d2d2d2;">0</span>
<div style="left:1609px;top:918px;width:33px;height:20px;background:#4c4c4c;"></div>
<div style="left:1642px;top:918px;width:1px;height:20px;background:#2a2a2a;"></div>
<svg class="i" style="left:1614px;top:921px;" width="14" height="14" viewBox="0 0 14 14"><path d="M4.300 .500H9.700L13.500 4.300V9.700L9.700 13.500H4.300L.500 9.700V4.300Z" fill="#e4e4e4"/><rect x="6.200" y="2.800" width="1.600" height="5.200" fill="#4c4c4c"/><rect x="6.200" y="9.200" width="1.600" height="1.600" fill="#4c4c4c"/></svg>
<span class="t" style="left:1631px;top:921px;color:#d2d2d2;">0</span>
<div style="left:0px;top:998px;width:1643px;height:1px;background:#2a2a2a;"></div>
</section>
<!-- status bar -->
<section class="status-bar">
<div style="left:0px;top:1018px;width:1920px;height:22px;background:#191919;"></div>
<div style="left:1814px;top:1020px;width:1px;height:20px;background:#2a2a2a;"></div>
<div style="left:1840px;top:1020px;width:1px;height:20px;background:#2a2a2a;"></div>
<div style="left:1866px;top:1020px;width:1px;height:20px;background:#2a2a2a;"></div>
<div style="left:1893px;top:1020px;width:1px;height:20px;background:#2a2a2a;"></div>
<svg class="i" style="left:1819px;top:1023px;" width="15" height="15" viewBox="0 0 15 15"><ellipse cx="7" cy="8.500" rx="3.600" ry="4.600" fill="#f5c211"/><circle cx="7" cy="3.600" r="2.100" fill="#f5c211"/><path d="M3.600 6.500 1 4.500M3.400 9H.500M3.800 11.500 1.500 13.500M10.400 6.500 13 4.500M10.600 9H12M5 1.500 4 0M9 1.500 10 0" stroke="#f5c211" stroke-width="1.200"/><rect x="12.500" y="7" width="1.800" height="4.500" fill="#f5c211"/><rect x="12.500" y="12.500" width="1.800" height="1.800" fill="#f5c211"/></svg>
<svg class="i" style="left:1846px;top:1023px;" width="15" height="15" viewBox="0 0 15 15"><ellipse cx="7.500" cy="3.500" rx="5.500" ry="2.500" fill="#c4c4c4"/><path d="M2 6Q7.500 9.500 13 6V8.500Q7.500 12 2 8.500Z M2 10Q7.500 13.500 13 10V12Q7.500 15.500 2 12Z" fill="#c4c4c4"/><path d="M1 2 14 14" stroke="#191919" stroke-width="2.200"/><path d="M1.500 1.500 14 13" stroke="#c4c4c4" stroke-width="1.100"/></svg>
<svg class="i" style="left:1873px;top:1023px;" width="15" height="15" viewBox="0 0 15 15"><circle cx="7.500" cy="7.500" r="5.500" fill="none" stroke="#c4c4c4" stroke-width="1.100" stroke-dasharray="5 2"/><ellipse cx="7.500" cy="7.500" rx="2.500" ry="5.500" fill="none" stroke="#c4c4c4" stroke-width="1"/><path d="M2 7.500H13" stroke="#c4c4c4"/><path d="M1.500 1.500 13.500 13.500" stroke="#191919" stroke-width="2.400"/><path d="M1.500 1.500 13.500 13.500" stroke="#c4c4c4" stroke-width="1.200"/></svg>
<svg class="i" style="left:1899px;top:1023px;" width="15" height="15" viewBox="0 0 15 15"><circle cx="7.500" cy="7.500" r="6" fill="none" stroke="#c4c4c4" stroke-width="1.200"/><path d="M4.500 7.800 6.800 10 10.800 5.500" fill="none" stroke="#c4c4c4" stroke-width="1.300"/></svg>
</section>
<!-- annotation overlay -->
<section class="annotation-overlay">
<div style="left:1688px;top:389.5px;width:202px;height:556.5px;border:3px solid #f23838;"></div>
<div style="left:1465px;top:722.8px;width:146.8px;height:23px;border:3px solid #f23838;"></div>
<svg class="i" style="left:1615px;top:680px;" width="115" height="60" viewBox="0 0 115 60"><path d="M8.500 50 87.300 15.600 85 10 104.600 10.700 92.200 23.800 90.600 21.200 9 51.200Z" fill="#f23838"/></svg>
</section>
</div>
</body>
</html>
